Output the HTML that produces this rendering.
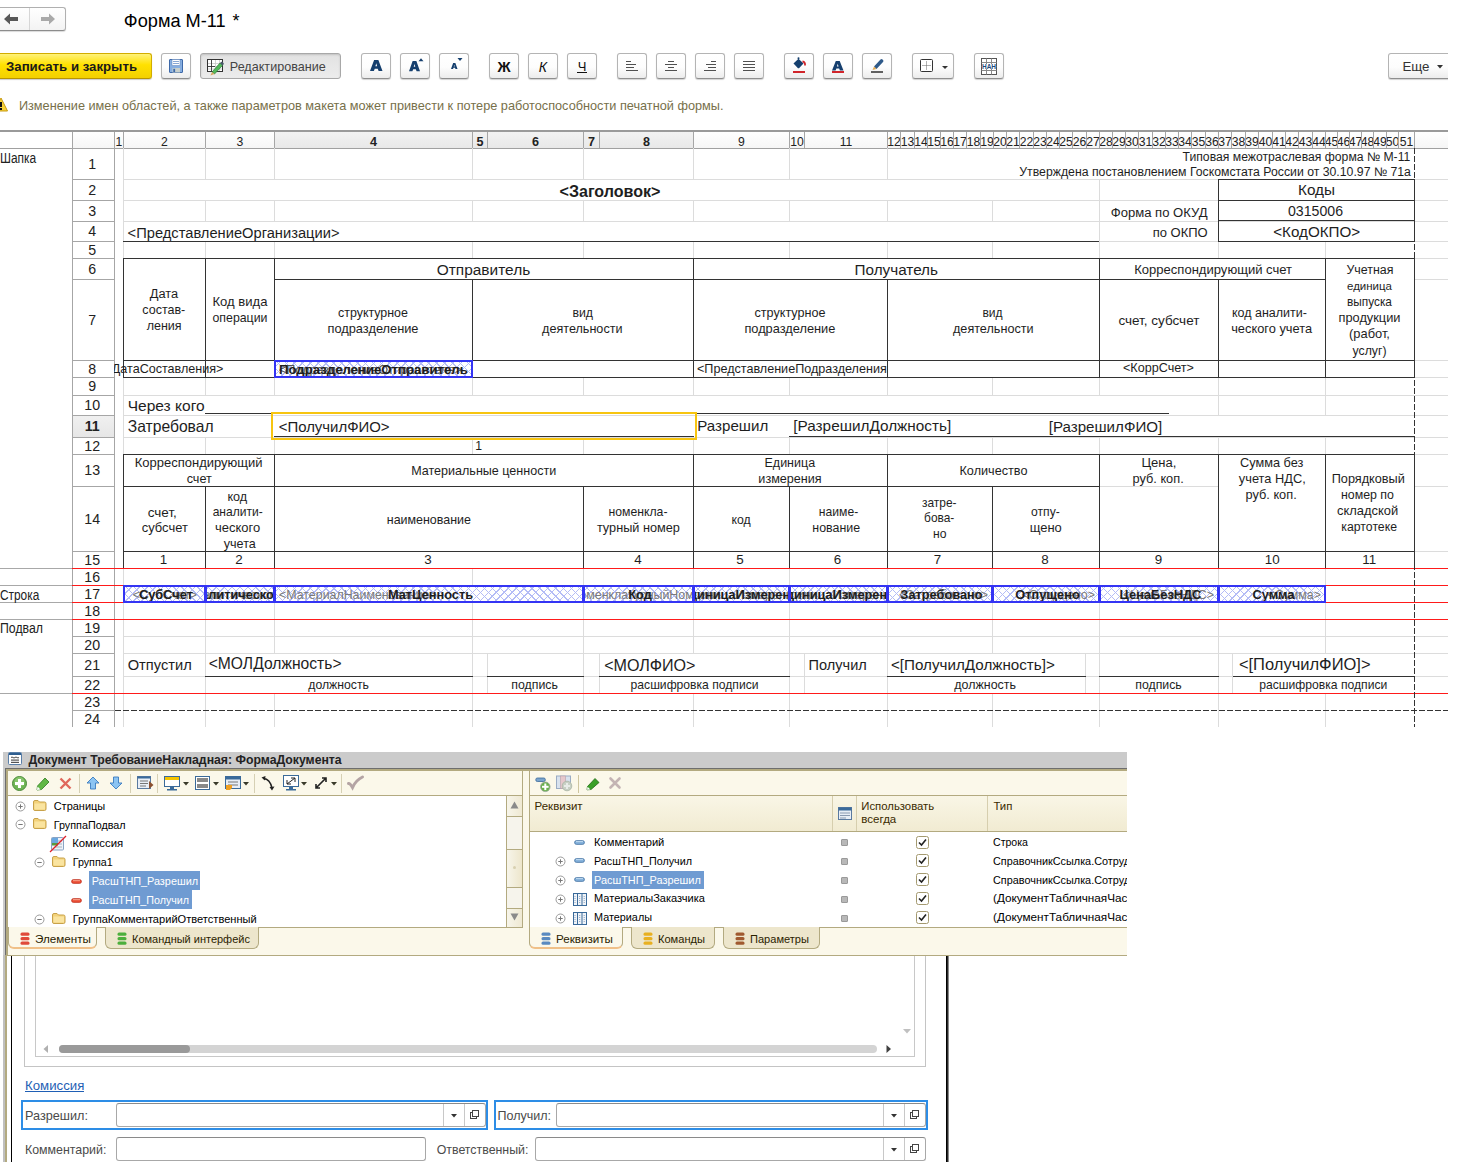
<!DOCTYPE html><html><head><meta charset="utf-8"><style>
html,body{margin:0;padding:0;background:#fff;width:1458px;height:1162px;overflow:hidden;position:relative;}
body{font-family:"Liberation Sans",sans-serif;}
.a{position:absolute;}
.t{position:absolute;white-space:nowrap;}
svg{position:absolute;overflow:visible;}
</style></head><body><div class="a" style="left:-4px;top:7px;width:70px;height:24px;background:linear-gradient(#ffffff,#f3f3f3);border:1px solid #b0b0b0;border-bottom-color:#8c8c8c;border-radius:3px;box-sizing:border-box;box-shadow:0 1px 1px rgba(0,0,0,0.15)"></div>
<div class="a" style="left:29px;top:8px;width:1px;height:22px;background:#d6d6d6;"></div>
<svg style="left:3px;top:13px" width="16" height="12" viewBox="0 0 16 12"><path d="M1 6 L7 0.5 L7 4 L15 4 L15 8 L7 8 L7 11.5 Z" fill="#585858"/></svg>
<svg style="left:40px;top:13px" width="16" height="12" viewBox="0 0 16 12"><path d="M15 6 L9 0.5 L9 4 L1 4 L1 8 L9 8 L9 11.5 Z" fill="#a9a9a9"/></svg>
<div class="t" style="left:123.80px;top:11.28px;font-size:18.22px;line-height:20px;color:#000;">Форма М-11</div>
<div class="t" style="left:232.50px;top:11.36px;font-size:18.00px;line-height:20px;color:#000;">*</div>
<div class="a" style="left:-3px;top:53px;width:155px;height:26px;background:linear-gradient(#fff27a 0%,#ffe100 45%,#f3d000 100%);border:1px solid #d2ad00;border-bottom-color:#b89400;border-radius:3px;box-sizing:border-box;box-shadow:0 1px 1px rgba(0,0,0,0.2)"></div>
<div class="t" style="left:6.00px;top:56.52px;font-size:13.22px;line-height:20px;color:#1a1a1a;font-weight:bold;">Записать и закрыть</div>
<div class="a" style="left:161px;top:53px;width:30px;height:26px;background:linear-gradient(#ffffff 0%,#fdfdfd 55%,#ececec 100%);border:1px solid #b4b4b4;border-bottom-color:#8e8e8e;border-radius:3px;box-sizing:border-box;box-shadow:0 1px 1px rgba(0,0,0,0.18)"></div>
<svg style="left:169px;top:59px" width="14" height="14" viewBox="0 0 14 14"><rect x="0.5" y="0.5" width="13" height="13" rx="0.5" fill="#86aee0" stroke="#3d68a8"/><rect x="3" y="0.5" width="8" height="6" fill="#fff" stroke="#5a80b8" stroke-width="0.5"/><path d="M4 2.5H10M4 4.5H10" stroke="#6a90c8" stroke-width="0.8"/><rect x="3.5" y="9" width="7.5" height="4.5" fill="#c8d0cc"/><rect x="4.3" y="9.8" width="1.8" height="3.2" fill="#3d68a8"/></svg>
<div class="a" style="left:200px;top:53px;width:141px;height:26px;background:linear-gradient(#e2e2e2,#ececec);border:1px solid #a8a8a8;border-radius:3px;box-sizing:border-box;box-shadow:inset 0 1px 2px rgba(0,0,0,0.15)"></div>
<svg style="left:206px;top:58px" width="19" height="17" viewBox="0 0 19 17"><rect x="1.5" y="1.5" width="15" height="12" fill="#fff" stroke="#333"/><path d="M2 5.5H16M2 8.5H16M2 11H16M9.5 2V13M13.5 2V13" stroke="#c8c8c8" stroke-width="0.8"/><path d="M5.5 2V13M2 8.5H9" stroke="#333" stroke-width="0.9"/><path d="M6 14 L14 5 L16.5 7.5 L8.5 16 Z" fill="#52b85a" stroke="#2f7a3a" stroke-width="0.7"/><path d="M14 5 L15 4 Q15.8 3.3 16.5 4 L17.5 5 Q18.2 5.7 17.5 6.5 L16.5 7.5Z" fill="#4a5a68"/><path d="M6 14 L8.5 16 L4.5 17.5Z" fill="#d8a860"/></svg>
<div class="t" style="left:229.80px;top:56.73px;font-size:12.60px;line-height:20px;color:#444;">Редактирование</div>
<div class="a" style="left:361px;top:53px;width:30px;height:26px;background:linear-gradient(#ffffff 0%,#fdfdfd 55%,#ececec 100%);border:1px solid #b4b4b4;border-bottom-color:#8e8e8e;border-radius:3px;box-sizing:border-box;box-shadow:0 1px 1px rgba(0,0,0,0.18)"></div>
<div class="a" style="left:400px;top:53px;width:30px;height:26px;background:linear-gradient(#ffffff 0%,#fdfdfd 55%,#ececec 100%);border:1px solid #b4b4b4;border-bottom-color:#8e8e8e;border-radius:3px;box-sizing:border-box;box-shadow:0 1px 1px rgba(0,0,0,0.18)"></div>
<div class="a" style="left:439px;top:53px;width:30px;height:26px;background:linear-gradient(#ffffff 0%,#fdfdfd 55%,#ececec 100%);border:1px solid #b4b4b4;border-bottom-color:#8e8e8e;border-radius:3px;box-sizing:border-box;box-shadow:0 1px 1px rgba(0,0,0,0.18)"></div>
<div class="a" style="left:489px;top:53px;width:30px;height:26px;background:linear-gradient(#ffffff 0%,#fdfdfd 55%,#ececec 100%);border:1px solid #b4b4b4;border-bottom-color:#8e8e8e;border-radius:3px;box-sizing:border-box;box-shadow:0 1px 1px rgba(0,0,0,0.18)"></div>
<div class="a" style="left:528px;top:53px;width:30px;height:26px;background:linear-gradient(#ffffff 0%,#fdfdfd 55%,#ececec 100%);border:1px solid #b4b4b4;border-bottom-color:#8e8e8e;border-radius:3px;box-sizing:border-box;box-shadow:0 1px 1px rgba(0,0,0,0.18)"></div>
<div class="a" style="left:567px;top:53px;width:30px;height:26px;background:linear-gradient(#ffffff 0%,#fdfdfd 55%,#ececec 100%);border:1px solid #b4b4b4;border-bottom-color:#8e8e8e;border-radius:3px;box-sizing:border-box;box-shadow:0 1px 1px rgba(0,0,0,0.18)"></div>
<div class="a" style="left:617px;top:53px;width:30px;height:26px;background:linear-gradient(#ffffff 0%,#fdfdfd 55%,#ececec 100%);border:1px solid #b4b4b4;border-bottom-color:#8e8e8e;border-radius:3px;box-sizing:border-box;box-shadow:0 1px 1px rgba(0,0,0,0.18)"></div>
<div class="a" style="left:656px;top:53px;width:30px;height:26px;background:linear-gradient(#ffffff 0%,#fdfdfd 55%,#ececec 100%);border:1px solid #b4b4b4;border-bottom-color:#8e8e8e;border-radius:3px;box-sizing:border-box;box-shadow:0 1px 1px rgba(0,0,0,0.18)"></div>
<div class="a" style="left:695px;top:53px;width:30px;height:26px;background:linear-gradient(#ffffff 0%,#fdfdfd 55%,#ececec 100%);border:1px solid #b4b4b4;border-bottom-color:#8e8e8e;border-radius:3px;box-sizing:border-box;box-shadow:0 1px 1px rgba(0,0,0,0.18)"></div>
<div class="a" style="left:734px;top:53px;width:30px;height:26px;background:linear-gradient(#ffffff 0%,#fdfdfd 55%,#ececec 100%);border:1px solid #b4b4b4;border-bottom-color:#8e8e8e;border-radius:3px;box-sizing:border-box;box-shadow:0 1px 1px rgba(0,0,0,0.18)"></div>
<div class="a" style="left:784px;top:53px;width:30px;height:26px;background:linear-gradient(#ffffff 0%,#fdfdfd 55%,#ececec 100%);border:1px solid #b4b4b4;border-bottom-color:#8e8e8e;border-radius:3px;box-sizing:border-box;box-shadow:0 1px 1px rgba(0,0,0,0.18)"></div>
<div class="a" style="left:823px;top:53px;width:30px;height:26px;background:linear-gradient(#ffffff 0%,#fdfdfd 55%,#ececec 100%);border:1px solid #b4b4b4;border-bottom-color:#8e8e8e;border-radius:3px;box-sizing:border-box;box-shadow:0 1px 1px rgba(0,0,0,0.18)"></div>
<div class="a" style="left:862px;top:53px;width:30px;height:26px;background:linear-gradient(#ffffff 0%,#fdfdfd 55%,#ececec 100%);border:1px solid #b4b4b4;border-bottom-color:#8e8e8e;border-radius:3px;box-sizing:border-box;box-shadow:0 1px 1px rgba(0,0,0,0.18)"></div>
<svg style="left:370px;top:60px" width="13.5" height="12" viewBox="0 0 13.5 12"><path d="M0 11 L4.12 0 L8.38 0 L12.5 11 L8.62 11 L7.75 8.80 L4.75 8.80 L3.88 11 Z M5.38 6.27 L6.25 3.30 L7.12 6.27 Z" fill="#153f6e" fill-rule="evenodd"/></svg>
<svg style="left:409.3px;top:60.7px" width="12" height="11.3" viewBox="0 0 12 11.3"><path d="M0 10.3 L3.63 0 L7.37 0 L11 10.3 L7.59 10.3 L6.82 8.24 L4.18 8.24 L3.41 10.3 Z M4.73 5.87 L5.50 3.09 L6.27 5.87 Z" fill="#153f6e" fill-rule="evenodd"/></svg>
<svg style="left:417.5px;top:57.5px" width="7" height="4" viewBox="0 0 7 4"><path d="M0.5 3.3 L3 0.3 L5.5 3.3Z" fill="#153f6e"/></svg>
<svg style="left:451px;top:63px" width="7.5" height="7" viewBox="0 0 7.5 7"><path d="M0 6 L2.15 0 L4.36 0 L6.5 6 L4.48 6 L4.03 4.80 L2.47 4.80 L2.02 6 Z M2.79 3.42 L3.25 1.80 L3.70 3.42 Z" fill="#153f6e" fill-rule="evenodd"/></svg>
<svg style="left:456.5px;top:58px" width="7" height="4" viewBox="0 0 7 4"><path d="M0.5 0 L5.5 0 L3 3Z" fill="#153f6e"/></svg>
<div class="t" style="left:497.45px;top:57.07px;font-size:14.50px;line-height:20px;color:#111;font-weight:bold;">Ж</div>
<div class="t" style="left:538.87px;top:56.55px;font-size:14.00px;line-height:20px;color:#111;font-style:italic;">К</div>
<div class="t" style="left:577.67px;top:56.69px;font-size:13.00px;line-height:20px;color:#111;">Ч</div>
<div class="a" style="left:577px;top:72px;width:10px;height:1px;background:#111;"></div>
<div class="a" style="left:626px;top:61px;width:5px;height:1px;background:#505050;"></div>
<div class="a" style="left:626px;top:64px;width:10px;height:1px;background:#505050;"></div>
<div class="a" style="left:626px;top:67px;width:8px;height:1px;background:#505050;"></div>
<div class="a" style="left:626px;top:70px;width:12px;height:1px;background:#505050;"></div>
<div class="a" style="left:668px;top:61px;width:6px;height:1px;background:#505050;"></div>
<div class="a" style="left:665px;top:64px;width:12px;height:1px;background:#505050;"></div>
<div class="a" style="left:668px;top:67px;width:6px;height:1px;background:#505050;"></div>
<div class="a" style="left:665px;top:70px;width:12px;height:1px;background:#505050;"></div>
<div class="a" style="left:711px;top:61px;width:5px;height:1px;background:#505050;"></div>
<div class="a" style="left:706px;top:64px;width:10px;height:1px;background:#505050;"></div>
<div class="a" style="left:708px;top:67px;width:8px;height:1px;background:#505050;"></div>
<div class="a" style="left:704px;top:70px;width:12px;height:1px;background:#505050;"></div>
<div class="a" style="left:743px;top:61px;width:12px;height:1px;background:#505050;"></div>
<div class="a" style="left:743px;top:64px;width:12px;height:1px;background:#505050;"></div>
<div class="a" style="left:743px;top:67px;width:12px;height:1px;background:#505050;"></div>
<div class="a" style="left:743px;top:70px;width:12px;height:1px;background:#505050;"></div>
<svg style="left:792px;top:57px" width="15" height="13" viewBox="0 0 15 13"><path d="M1.5 6.5 L6.5 1.8 L11.5 6.5 L7.5 10.8 Q6.5 11.8 5.5 10.8 Z" fill="#153f6e"/><circle cx="6.5" cy="1.3" r="1" fill="#153f6e"/><path d="M10.5 4.5 Q13.5 4.8 13 8.5" stroke="#d0242a" stroke-width="1.8" fill="none"/></svg>
<div class="a" style="left:793px;top:71px;width:12px;height:2px;background:#d0242a;"></div>
<svg style="left:832px;top:60.5px" width="12.5" height="10.5" viewBox="0 0 12.5 10.5"><path d="M0 9.5 L3.80 0 L7.71 0 L11.5 9.5 L7.93 9.5 L7.13 7.60 L4.37 7.60 L3.56 9.5 Z M4.95 5.41 L5.75 2.85 L6.55 5.41 Z" fill="#153f6e" fill-rule="evenodd"/></svg>
<div class="a" style="left:832px;top:71px;width:12px;height:2px;background:#d0242a;"></div>
<svg style="left:871px;top:57px" width="14" height="14" viewBox="0 0 14 14"><path d="M3 9.5 L9.5 2.5 Q10.5 1.5 11.5 2.5 L12 3 Q13 4 12 5 L5.5 12 Z" fill="#2f5a8a"/><path d="M3 9.5 L5.5 12 L1.5 13 Z" fill="#e0a850"/></svg>
<div class="a" style="left:871px;top:71px;width:12px;height:2px;background:#606060;"></div>
<div class="a" style="left:912px;top:53px;width:42px;height:26px;background:linear-gradient(#ffffff 0%,#fdfdfd 55%,#ececec 100%);border:1px solid #b4b4b4;border-bottom-color:#8e8e8e;border-radius:3px;box-sizing:border-box;box-shadow:0 1px 1px rgba(0,0,0,0.18)"></div>
<svg style="left:920px;top:59px" width="14" height="14" viewBox="0 0 14 14"><rect x="0.5" y="0.5" width="12" height="12" rx="1" fill="#fff" stroke="#333"/><path d="M6.5 2.5V11M2.5 6.5H11" stroke="#666" stroke-dasharray="1 1"/></svg>
<svg style="left:941.5px;top:66px" width="6" height="4" viewBox="0 0 6 4"><path d="M0 0H6L3 3Z" fill="#333"/></svg>
<div class="a" style="left:974px;top:53px;width:30px;height:26px;background:linear-gradient(#ffffff 0%,#fdfdfd 55%,#ececec 100%);border:1px solid #b4b4b4;border-bottom-color:#8e8e8e;border-radius:3px;box-sizing:border-box;box-shadow:0 1px 1px rgba(0,0,0,0.18)"></div>
<svg style="left:981px;top:58px" width="16" height="17" viewBox="0 0 16 17"><rect x="0.5" y="0.5" width="15" height="16" fill="#fff" stroke="#555"/><path d="M0.5 4.5H15.5M0.5 8.5H15.5M0.5 12.5H15.5M5.5 0.5V16.5M10.5 0.5V16.5" stroke="#888"/><rect x="1" y="6" width="14" height="5" fill="#fff"/><text x="8" y="10.6" font-size="6.5" font-weight="bold" text-anchor="middle" fill="#1d4a7c" font-family="Liberation Sans">HAH</text></svg>
<div class="a" style="left:1388px;top:50px;width:60px;height:32px;overflow:hidden">
<div class="a" style="left:0px;top:3px;width:66px;height:26px;background:linear-gradient(#ffffff 0%,#fdfdfd 55%,#ececec 100%);border:1px solid #b4b4b4;border-bottom-color:#8e8e8e;border-radius:3px;box-sizing:border-box;box-shadow:0 1px 1px rgba(0,0,0,0.18)"></div>
</div>
<div class="t" style="left:1402.40px;top:56.98px;font-size:13.32px;line-height:20px;color:#333;">Еще</div>
<svg style="left:1437px;top:65px" width="6" height="4" viewBox="0 0 6 4"><path d="M0 0H6L3 3.5Z" fill="#333"/></svg>
<svg style="left:-5px;top:97px" width="13" height="15" viewBox="0 0 13 15"><path d="M6 1 L12.5 14 L-0.5 14 Z" fill="#f7d23a" stroke="#c79a10"/><rect x="5" y="5" width="2" height="5" fill="#111"/><rect x="5" y="11" width="2" height="2" fill="#111"/></svg>
<div class="t" style="left:18.90px;top:95.94px;font-size:12.73px;line-height:20px;color:#77704a;">Изменение имен областей, а также параметров макета может привести к потере работоспособности печатной формы.</div>
<div class="a" style="left:72px;top:131px;width:1376px;height:17px;background:linear-gradient(#ffffff,#f6f6f6);"></div>
<div class="a" style="left:274px;top:132px;width:419px;height:16px;background:linear-gradient(#f2f2f2,#e8e8e8);"></div>
<div class="a" style="left:0px;top:130px;width:1448px;height:2px;background:#9a9a9a;"></div>
<div class="a" style="left:0px;top:148px;width:1448px;height:1px;background:#a0a0a0;"></div>
<div class="a" style="left:72px;top:132px;width:1px;height:595px;background:#a6a6a6;"></div>
<div class="a" style="left:114px;top:132px;width:1px;height:595px;background:#a6a6a6;"></div>
<div class="a" style="left:123px;top:132px;width:1px;height:16px;background:#a6a6a6;"></div>
<div class="a" style="left:115px;top:132px;width:8px;height:16px;overflow:hidden">
<div class="t" style="left:0.61px;top:0.37px;font-size:12.20px;line-height:20px;color:#222;">1</div>
</div>
<div class="a" style="left:205px;top:132px;width:1px;height:16px;background:#a6a6a6;"></div>
<div class="a" style="left:124px;top:132px;width:81px;height:16px;overflow:hidden">
<div class="t" style="left:37.11px;top:0.37px;font-size:12.20px;line-height:20px;color:#222;">2</div>
</div>
<div class="a" style="left:274px;top:132px;width:1px;height:16px;background:#a6a6a6;"></div>
<div class="a" style="left:206px;top:132px;width:68px;height:16px;overflow:hidden">
<div class="t" style="left:30.61px;top:0.37px;font-size:12.20px;line-height:20px;color:#222;">3</div>
</div>
<div class="a" style="left:472px;top:132px;width:1px;height:16px;background:#a6a6a6;"></div>
<div class="a" style="left:275px;top:132px;width:197px;height:16px;overflow:hidden">
<div class="t" style="left:95.00px;top:0.23px;font-size:12.60px;line-height:20px;color:#222;font-weight:bold;">4</div>
</div>
<div class="a" style="left:487px;top:132px;width:1px;height:16px;background:#a6a6a6;"></div>
<div class="a" style="left:473px;top:132px;width:14px;height:16px;overflow:hidden">
<div class="t" style="left:3.50px;top:0.23px;font-size:12.60px;line-height:20px;color:#222;font-weight:bold;">5</div>
</div>
<div class="a" style="left:583px;top:132px;width:1px;height:16px;background:#a6a6a6;"></div>
<div class="a" style="left:488px;top:132px;width:95px;height:16px;overflow:hidden">
<div class="t" style="left:44.00px;top:0.23px;font-size:12.60px;line-height:20px;color:#222;font-weight:bold;">6</div>
</div>
<div class="a" style="left:599px;top:132px;width:1px;height:16px;background:#a6a6a6;"></div>
<div class="a" style="left:584px;top:132px;width:15px;height:16px;overflow:hidden">
<div class="t" style="left:4.00px;top:0.23px;font-size:12.60px;line-height:20px;color:#222;font-weight:bold;">7</div>
</div>
<div class="a" style="left:693px;top:132px;width:1px;height:16px;background:#a6a6a6;"></div>
<div class="a" style="left:600px;top:132px;width:93px;height:16px;overflow:hidden">
<div class="t" style="left:43.00px;top:0.23px;font-size:12.60px;line-height:20px;color:#222;font-weight:bold;">8</div>
</div>
<div class="a" style="left:789px;top:132px;width:1px;height:16px;background:#a6a6a6;"></div>
<div class="a" style="left:694px;top:132px;width:95px;height:16px;overflow:hidden">
<div class="t" style="left:44.11px;top:0.37px;font-size:12.20px;line-height:20px;color:#222;">9</div>
</div>
<div class="a" style="left:804px;top:132px;width:1px;height:16px;background:#a6a6a6;"></div>
<div class="a" style="left:790px;top:132px;width:14px;height:16px;overflow:hidden">
<div class="t" style="left:0.22px;top:0.37px;font-size:12.20px;line-height:20px;color:#222;">10</div>
</div>
<div class="a" style="left:887px;top:132px;width:1px;height:16px;background:#a6a6a6;"></div>
<div class="a" style="left:805px;top:132px;width:82px;height:16px;overflow:hidden">
<div class="t" style="left:34.67px;top:0.37px;font-size:12.20px;line-height:20px;color:#222;">11</div>
</div>
<div class="a" style="left:900px;top:132px;width:1px;height:16px;background:#a6a6a6;"></div>
<div class="a" style="left:888px;top:132px;width:12px;height:16px;overflow:hidden">
<div class="t" style="left:-0.78px;top:0.37px;font-size:12.20px;line-height:20px;color:#222;">12</div>
</div>
<div class="a" style="left:914px;top:132px;width:1px;height:16px;background:#a6a6a6;"></div>
<div class="a" style="left:901px;top:132px;width:13px;height:16px;overflow:hidden">
<div class="t" style="left:-0.28px;top:0.37px;font-size:12.20px;line-height:20px;color:#222;">13</div>
</div>
<div class="a" style="left:927px;top:132px;width:1px;height:16px;background:#a6a6a6;"></div>
<div class="a" style="left:915px;top:132px;width:12px;height:16px;overflow:hidden">
<div class="t" style="left:-0.78px;top:0.37px;font-size:12.20px;line-height:20px;color:#222;">14</div>
</div>
<div class="a" style="left:940px;top:132px;width:1px;height:16px;background:#a6a6a6;"></div>
<div class="a" style="left:928px;top:132px;width:12px;height:16px;overflow:hidden">
<div class="t" style="left:-0.78px;top:0.37px;font-size:12.20px;line-height:20px;color:#222;">15</div>
</div>
<div class="a" style="left:953px;top:132px;width:1px;height:16px;background:#a6a6a6;"></div>
<div class="a" style="left:941px;top:132px;width:12px;height:16px;overflow:hidden">
<div class="t" style="left:-0.78px;top:0.37px;font-size:12.20px;line-height:20px;color:#222;">16</div>
</div>
<div class="a" style="left:966px;top:132px;width:1px;height:16px;background:#a6a6a6;"></div>
<div class="a" style="left:954px;top:132px;width:12px;height:16px;overflow:hidden">
<div class="t" style="left:-0.78px;top:0.37px;font-size:12.20px;line-height:20px;color:#222;">17</div>
</div>
<div class="a" style="left:980px;top:132px;width:1px;height:16px;background:#a6a6a6;"></div>
<div class="a" style="left:967px;top:132px;width:13px;height:16px;overflow:hidden">
<div class="t" style="left:-0.28px;top:0.37px;font-size:12.20px;line-height:20px;color:#222;">18</div>
</div>
<div class="a" style="left:993px;top:132px;width:1px;height:16px;background:#a6a6a6;"></div>
<div class="a" style="left:981px;top:132px;width:12px;height:16px;overflow:hidden">
<div class="t" style="left:-0.78px;top:0.37px;font-size:12.20px;line-height:20px;color:#222;">19</div>
</div>
<div class="a" style="left:1006px;top:132px;width:1px;height:16px;background:#a6a6a6;"></div>
<div class="a" style="left:994px;top:132px;width:12px;height:16px;overflow:hidden">
<div class="t" style="left:-0.78px;top:0.37px;font-size:12.20px;line-height:20px;color:#222;">20</div>
</div>
<div class="a" style="left:1019px;top:132px;width:1px;height:16px;background:#a6a6a6;"></div>
<div class="a" style="left:1007px;top:132px;width:12px;height:16px;overflow:hidden">
<div class="t" style="left:-0.78px;top:0.37px;font-size:12.20px;line-height:20px;color:#222;">21</div>
</div>
<div class="a" style="left:1033px;top:132px;width:1px;height:16px;background:#a6a6a6;"></div>
<div class="a" style="left:1020px;top:132px;width:13px;height:16px;overflow:hidden">
<div class="t" style="left:-0.28px;top:0.37px;font-size:12.20px;line-height:20px;color:#222;">22</div>
</div>
<div class="a" style="left:1046px;top:132px;width:1px;height:16px;background:#a6a6a6;"></div>
<div class="a" style="left:1034px;top:132px;width:12px;height:16px;overflow:hidden">
<div class="t" style="left:-0.78px;top:0.37px;font-size:12.20px;line-height:20px;color:#222;">23</div>
</div>
<div class="a" style="left:1059px;top:132px;width:1px;height:16px;background:#a6a6a6;"></div>
<div class="a" style="left:1047px;top:132px;width:12px;height:16px;overflow:hidden">
<div class="t" style="left:-0.78px;top:0.37px;font-size:12.20px;line-height:20px;color:#222;">24</div>
</div>
<div class="a" style="left:1072px;top:132px;width:1px;height:16px;background:#a6a6a6;"></div>
<div class="a" style="left:1060px;top:132px;width:12px;height:16px;overflow:hidden">
<div class="t" style="left:-0.78px;top:0.37px;font-size:12.20px;line-height:20px;color:#222;">25</div>
</div>
<div class="a" style="left:1086px;top:132px;width:1px;height:16px;background:#a6a6a6;"></div>
<div class="a" style="left:1073px;top:132px;width:13px;height:16px;overflow:hidden">
<div class="t" style="left:-0.28px;top:0.37px;font-size:12.20px;line-height:20px;color:#222;">26</div>
</div>
<div class="a" style="left:1099px;top:132px;width:1px;height:16px;background:#a6a6a6;"></div>
<div class="a" style="left:1087px;top:132px;width:12px;height:16px;overflow:hidden">
<div class="t" style="left:-0.78px;top:0.37px;font-size:12.20px;line-height:20px;color:#222;">27</div>
</div>
<div class="a" style="left:1112px;top:132px;width:1px;height:16px;background:#a6a6a6;"></div>
<div class="a" style="left:1100px;top:132px;width:12px;height:16px;overflow:hidden">
<div class="t" style="left:-0.78px;top:0.37px;font-size:12.20px;line-height:20px;color:#222;">28</div>
</div>
<div class="a" style="left:1125px;top:132px;width:1px;height:16px;background:#a6a6a6;"></div>
<div class="a" style="left:1113px;top:132px;width:12px;height:16px;overflow:hidden">
<div class="t" style="left:-0.78px;top:0.37px;font-size:12.20px;line-height:20px;color:#222;">29</div>
</div>
<div class="a" style="left:1138px;top:132px;width:1px;height:16px;background:#a6a6a6;"></div>
<div class="a" style="left:1126px;top:132px;width:12px;height:16px;overflow:hidden">
<div class="t" style="left:-0.78px;top:0.37px;font-size:12.20px;line-height:20px;color:#222;">30</div>
</div>
<div class="a" style="left:1152px;top:132px;width:1px;height:16px;background:#a6a6a6;"></div>
<div class="a" style="left:1139px;top:132px;width:13px;height:16px;overflow:hidden">
<div class="t" style="left:-0.28px;top:0.37px;font-size:12.20px;line-height:20px;color:#222;">31</div>
</div>
<div class="a" style="left:1165px;top:132px;width:1px;height:16px;background:#a6a6a6;"></div>
<div class="a" style="left:1153px;top:132px;width:12px;height:16px;overflow:hidden">
<div class="t" style="left:-0.78px;top:0.37px;font-size:12.20px;line-height:20px;color:#222;">32</div>
</div>
<div class="a" style="left:1178px;top:132px;width:1px;height:16px;background:#a6a6a6;"></div>
<div class="a" style="left:1166px;top:132px;width:12px;height:16px;overflow:hidden">
<div class="t" style="left:-0.78px;top:0.37px;font-size:12.20px;line-height:20px;color:#222;">33</div>
</div>
<div class="a" style="left:1191px;top:132px;width:1px;height:16px;background:#a6a6a6;"></div>
<div class="a" style="left:1179px;top:132px;width:12px;height:16px;overflow:hidden">
<div class="t" style="left:-0.78px;top:0.37px;font-size:12.20px;line-height:20px;color:#222;">34</div>
</div>
<div class="a" style="left:1205px;top:132px;width:1px;height:16px;background:#a6a6a6;"></div>
<div class="a" style="left:1192px;top:132px;width:13px;height:16px;overflow:hidden">
<div class="t" style="left:-0.28px;top:0.37px;font-size:12.20px;line-height:20px;color:#222;">35</div>
</div>
<div class="a" style="left:1218px;top:132px;width:1px;height:16px;background:#a6a6a6;"></div>
<div class="a" style="left:1206px;top:132px;width:12px;height:16px;overflow:hidden">
<div class="t" style="left:-0.78px;top:0.37px;font-size:12.20px;line-height:20px;color:#222;">36</div>
</div>
<div class="a" style="left:1231px;top:132px;width:1px;height:16px;background:#a6a6a6;"></div>
<div class="a" style="left:1219px;top:132px;width:12px;height:16px;overflow:hidden">
<div class="t" style="left:-0.78px;top:0.37px;font-size:12.20px;line-height:20px;color:#222;">37</div>
</div>
<div class="a" style="left:1245px;top:132px;width:1px;height:16px;background:#a6a6a6;"></div>
<div class="a" style="left:1232px;top:132px;width:13px;height:16px;overflow:hidden">
<div class="t" style="left:-0.28px;top:0.37px;font-size:12.20px;line-height:20px;color:#222;">38</div>
</div>
<div class="a" style="left:1258px;top:132px;width:1px;height:16px;background:#a6a6a6;"></div>
<div class="a" style="left:1246px;top:132px;width:12px;height:16px;overflow:hidden">
<div class="t" style="left:-0.78px;top:0.37px;font-size:12.20px;line-height:20px;color:#222;">39</div>
</div>
<div class="a" style="left:1272px;top:132px;width:1px;height:16px;background:#a6a6a6;"></div>
<div class="a" style="left:1259px;top:132px;width:13px;height:16px;overflow:hidden">
<div class="t" style="left:-0.28px;top:0.37px;font-size:12.20px;line-height:20px;color:#222;">40</div>
</div>
<div class="a" style="left:1285px;top:132px;width:1px;height:16px;background:#a6a6a6;"></div>
<div class="a" style="left:1273px;top:132px;width:12px;height:16px;overflow:hidden">
<div class="t" style="left:-0.78px;top:0.37px;font-size:12.20px;line-height:20px;color:#222;">41</div>
</div>
<div class="a" style="left:1298px;top:132px;width:1px;height:16px;background:#a6a6a6;"></div>
<div class="a" style="left:1286px;top:132px;width:12px;height:16px;overflow:hidden">
<div class="t" style="left:-0.78px;top:0.37px;font-size:12.20px;line-height:20px;color:#222;">42</div>
</div>
<div class="a" style="left:1312px;top:132px;width:1px;height:16px;background:#a6a6a6;"></div>
<div class="a" style="left:1299px;top:132px;width:13px;height:16px;overflow:hidden">
<div class="t" style="left:-0.28px;top:0.37px;font-size:12.20px;line-height:20px;color:#222;">43</div>
</div>
<div class="a" style="left:1325px;top:132px;width:1px;height:16px;background:#a6a6a6;"></div>
<div class="a" style="left:1313px;top:132px;width:12px;height:16px;overflow:hidden">
<div class="t" style="left:-0.78px;top:0.37px;font-size:12.20px;line-height:20px;color:#222;">44</div>
</div>
<div class="a" style="left:1337px;top:132px;width:1px;height:16px;background:#a6a6a6;"></div>
<div class="a" style="left:1326px;top:132px;width:11px;height:16px;overflow:hidden">
<div class="t" style="left:-1.28px;top:0.37px;font-size:12.20px;line-height:20px;color:#222;">45</div>
</div>
<div class="a" style="left:1349px;top:132px;width:1px;height:16px;background:#a6a6a6;"></div>
<div class="a" style="left:1338px;top:132px;width:11px;height:16px;overflow:hidden">
<div class="t" style="left:-1.28px;top:0.37px;font-size:12.20px;line-height:20px;color:#222;">46</div>
</div>
<div class="a" style="left:1361px;top:132px;width:1px;height:16px;background:#a6a6a6;"></div>
<div class="a" style="left:1350px;top:132px;width:11px;height:16px;overflow:hidden">
<div class="t" style="left:-1.28px;top:0.37px;font-size:12.20px;line-height:20px;color:#222;">47</div>
</div>
<div class="a" style="left:1373px;top:132px;width:1px;height:16px;background:#a6a6a6;"></div>
<div class="a" style="left:1362px;top:132px;width:11px;height:16px;overflow:hidden">
<div class="t" style="left:-1.28px;top:0.37px;font-size:12.20px;line-height:20px;color:#222;">48</div>
</div>
<div class="a" style="left:1386px;top:132px;width:1px;height:16px;background:#a6a6a6;"></div>
<div class="a" style="left:1374px;top:132px;width:12px;height:16px;overflow:hidden">
<div class="t" style="left:-0.78px;top:0.37px;font-size:12.20px;line-height:20px;color:#222;">49</div>
</div>
<div class="a" style="left:1398px;top:132px;width:1px;height:16px;background:#a6a6a6;"></div>
<div class="a" style="left:1387px;top:132px;width:11px;height:16px;overflow:hidden">
<div class="t" style="left:-1.28px;top:0.37px;font-size:12.20px;line-height:20px;color:#222;">50</div>
</div>
<div class="a" style="left:1414px;top:132px;width:1px;height:16px;background:#a6a6a6;"></div>
<div class="a" style="left:1399px;top:132px;width:15px;height:16px;overflow:hidden">
<div class="t" style="left:0.72px;top:0.37px;font-size:12.20px;line-height:20px;color:#222;">51</div>
</div>
<div class="a" style="left:1415px;top:132px;width:33px;height:16px;overflow:hidden">
<div class="t" style="left:33.00px;top:0.37px;font-size:12.20px;line-height:20px;color:#222;">9</div>
</div>
<div class="a" style="left:72px;top:179px;width:42px;height:1px;background:#a6a6a6;"></div>
<div class="t" style="left:88.25px;top:153.78px;font-size:14.20px;line-height:20px;color:#222;">1</div>
<div class="a" style="left:72px;top:200px;width:42px;height:1px;background:#a6a6a6;"></div>
<div class="t" style="left:88.25px;top:179.78px;font-size:14.20px;line-height:20px;color:#222;">2</div>
<div class="a" style="left:72px;top:221px;width:42px;height:1px;background:#a6a6a6;"></div>
<div class="t" style="left:88.25px;top:200.78px;font-size:14.20px;line-height:20px;color:#222;">3</div>
<div class="a" style="left:72px;top:241px;width:42px;height:1px;background:#a6a6a6;"></div>
<div class="t" style="left:88.25px;top:221.28px;font-size:14.20px;line-height:20px;color:#222;">4</div>
<div class="a" style="left:72px;top:258px;width:42px;height:1px;background:#a6a6a6;"></div>
<div class="t" style="left:88.25px;top:239.78px;font-size:14.20px;line-height:20px;color:#222;">5</div>
<div class="a" style="left:72px;top:279px;width:42px;height:1px;background:#a6a6a6;"></div>
<div class="t" style="left:88.25px;top:258.78px;font-size:14.20px;line-height:20px;color:#222;">6</div>
<div class="a" style="left:72px;top:360px;width:42px;height:1px;background:#a6a6a6;"></div>
<div class="t" style="left:88.25px;top:309.78px;font-size:14.20px;line-height:20px;color:#222;">7</div>
<div class="a" style="left:72px;top:377px;width:42px;height:1px;background:#a6a6a6;"></div>
<div class="t" style="left:88.25px;top:358.78px;font-size:14.20px;line-height:20px;color:#222;">8</div>
<div class="a" style="left:72px;top:395px;width:42px;height:1px;background:#a6a6a6;"></div>
<div class="t" style="left:88.25px;top:376.28px;font-size:14.20px;line-height:20px;color:#222;">9</div>
<div class="a" style="left:72px;top:415px;width:42px;height:1px;background:#a6a6a6;"></div>
<div class="t" style="left:84.30px;top:395.28px;font-size:14.20px;line-height:20px;color:#222;">10</div>
<div class="a" style="left:73px;top:416px;width:41px;height:21px;background:linear-gradient(#f0f0f0,#e6e6e6);"></div>
<div class="a" style="left:72px;top:437px;width:42px;height:1px;background:#a6a6a6;"></div>
<div class="t" style="left:84.70px;top:416.28px;font-size:14.20px;line-height:20px;color:#222;font-weight:bold;">11</div>
<div class="a" style="left:72px;top:454px;width:42px;height:1px;background:#a6a6a6;"></div>
<div class="t" style="left:84.30px;top:435.78px;font-size:14.20px;line-height:20px;color:#222;">12</div>
<div class="a" style="left:72px;top:486px;width:42px;height:1px;background:#a6a6a6;"></div>
<div class="t" style="left:84.30px;top:460.28px;font-size:14.20px;line-height:20px;color:#222;">13</div>
<div class="a" style="left:72px;top:551px;width:42px;height:1px;background:#a6a6a6;"></div>
<div class="t" style="left:84.30px;top:508.78px;font-size:14.20px;line-height:20px;color:#222;">14</div>
<div class="a" style="left:72px;top:568px;width:42px;height:1px;background:#a6a6a6;"></div>
<div class="t" style="left:84.30px;top:549.78px;font-size:14.20px;line-height:20px;color:#222;">15</div>
<div class="a" style="left:72px;top:585px;width:42px;height:1px;background:#a6a6a6;"></div>
<div class="t" style="left:84.30px;top:566.78px;font-size:14.20px;line-height:20px;color:#222;">16</div>
<div class="a" style="left:72px;top:602px;width:42px;height:1px;background:#a6a6a6;"></div>
<div class="t" style="left:84.30px;top:583.78px;font-size:14.20px;line-height:20px;color:#222;">17</div>
<div class="a" style="left:72px;top:619px;width:42px;height:1px;background:#a6a6a6;"></div>
<div class="t" style="left:84.30px;top:600.78px;font-size:14.20px;line-height:20px;color:#222;">18</div>
<div class="a" style="left:72px;top:636px;width:42px;height:1px;background:#a6a6a6;"></div>
<div class="t" style="left:84.30px;top:617.78px;font-size:14.20px;line-height:20px;color:#222;">19</div>
<div class="a" style="left:72px;top:653px;width:42px;height:1px;background:#a6a6a6;"></div>
<div class="t" style="left:84.30px;top:634.78px;font-size:14.20px;line-height:20px;color:#222;">20</div>
<div class="a" style="left:72px;top:676px;width:42px;height:1px;background:#a6a6a6;"></div>
<div class="t" style="left:84.30px;top:654.78px;font-size:14.20px;line-height:20px;color:#222;">21</div>
<div class="a" style="left:72px;top:693px;width:42px;height:1px;background:#a6a6a6;"></div>
<div class="t" style="left:84.30px;top:674.78px;font-size:14.20px;line-height:20px;color:#222;">22</div>
<div class="a" style="left:72px;top:710px;width:42px;height:1px;background:#a6a6a6;"></div>
<div class="t" style="left:84.30px;top:691.78px;font-size:14.20px;line-height:20px;color:#222;">23</div>
<div class="t" style="left:84.30px;top:708.78px;font-size:14.20px;line-height:20px;color:#222;">24</div>
<div class="a" style="left:72px;top:148px;width:42px;height:1px;background:#a6a6a6;"></div>
<div class="a" style="left:0px;top:568px;width:72px;height:1px;background:#a8a8a8;"></div>
<div class="a" style="left:0px;top:585px;width:72px;height:1px;background:#a8a8a8;"></div>
<div class="a" style="left:0px;top:602px;width:72px;height:1px;background:#a8a8a8;"></div>
<div class="a" style="left:0px;top:619px;width:72px;height:1px;background:#a8a8a8;"></div>
<div class="a" style="left:0px;top:693px;width:72px;height:1px;background:#a8a8a8;"></div>
<div class="t" style="left:0.00px;top:147.56px;font-size:14.53px;line-height:20px;color:#222;transform:scaleX(0.8220);transform-origin:0 0;">Шапка</div>
<div class="t" style="left:0.00px;top:584.56px;font-size:14.53px;line-height:20px;color:#222;transform:scaleX(0.8174);transform-origin:0 0;">Строка</div>
<div class="t" style="left:0.00px;top:618.36px;font-size:14.53px;line-height:20px;color:#222;transform:scaleX(0.8463);transform-origin:0 0;">Подвал</div>
<div class="a" style="left:123px;top:148px;width:1px;height:579px;background:#dcdcdc;"></div>
<div class="a" style="left:205px;top:148px;width:1px;height:31px;background:#dcdcdc;"></div>
<div class="a" style="left:274px;top:148px;width:1px;height:31px;background:#dcdcdc;"></div>
<div class="a" style="left:472px;top:148px;width:1px;height:31px;background:#dcdcdc;"></div>
<div class="a" style="left:583px;top:148px;width:1px;height:31px;background:#dcdcdc;"></div>
<div class="a" style="left:693px;top:148px;width:1px;height:31px;background:#dcdcdc;"></div>
<div class="a" style="left:789px;top:148px;width:1px;height:31px;background:#dcdcdc;"></div>
<div class="a" style="left:887px;top:148px;width:1px;height:31px;background:#dcdcdc;"></div>
<div class="a" style="left:1099px;top:179px;width:1px;height:21px;background:#dcdcdc;"></div>
<div class="a" style="left:205px;top:200px;width:1px;height:21px;background:#dcdcdc;"></div>
<div class="a" style="left:274px;top:200px;width:1px;height:21px;background:#dcdcdc;"></div>
<div class="a" style="left:472px;top:200px;width:1px;height:21px;background:#dcdcdc;"></div>
<div class="a" style="left:583px;top:200px;width:1px;height:21px;background:#dcdcdc;"></div>
<div class="a" style="left:693px;top:200px;width:1px;height:21px;background:#dcdcdc;"></div>
<div class="a" style="left:789px;top:200px;width:1px;height:21px;background:#dcdcdc;"></div>
<div class="a" style="left:887px;top:200px;width:1px;height:21px;background:#dcdcdc;"></div>
<div class="a" style="left:992px;top:200px;width:1px;height:21px;background:#dcdcdc;"></div>
<div class="a" style="left:1099px;top:200px;width:1px;height:21px;background:#dcdcdc;"></div>
<div class="a" style="left:1099px;top:221px;width:1px;height:20px;background:#dcdcdc;"></div>
<div class="a" style="left:205px;top:241px;width:1px;height:17px;background:#dcdcdc;"></div>
<div class="a" style="left:274px;top:241px;width:1px;height:17px;background:#dcdcdc;"></div>
<div class="a" style="left:472px;top:241px;width:1px;height:17px;background:#dcdcdc;"></div>
<div class="a" style="left:583px;top:241px;width:1px;height:17px;background:#dcdcdc;"></div>
<div class="a" style="left:693px;top:241px;width:1px;height:17px;background:#dcdcdc;"></div>
<div class="a" style="left:789px;top:241px;width:1px;height:17px;background:#dcdcdc;"></div>
<div class="a" style="left:887px;top:241px;width:1px;height:17px;background:#dcdcdc;"></div>
<div class="a" style="left:992px;top:241px;width:1px;height:17px;background:#dcdcdc;"></div>
<div class="a" style="left:1099px;top:241px;width:1px;height:17px;background:#dcdcdc;"></div>
<div class="a" style="left:1218px;top:241px;width:1px;height:17px;background:#dcdcdc;"></div>
<div class="a" style="left:1325px;top:241px;width:1px;height:17px;background:#dcdcdc;"></div>
<div class="a" style="left:205px;top:377px;width:1px;height:18px;background:#dcdcdc;"></div>
<div class="a" style="left:274px;top:377px;width:1px;height:18px;background:#dcdcdc;"></div>
<div class="a" style="left:472px;top:377px;width:1px;height:18px;background:#dcdcdc;"></div>
<div class="a" style="left:583px;top:377px;width:1px;height:18px;background:#dcdcdc;"></div>
<div class="a" style="left:693px;top:377px;width:1px;height:18px;background:#dcdcdc;"></div>
<div class="a" style="left:789px;top:377px;width:1px;height:18px;background:#dcdcdc;"></div>
<div class="a" style="left:887px;top:377px;width:1px;height:18px;background:#dcdcdc;"></div>
<div class="a" style="left:992px;top:377px;width:1px;height:18px;background:#dcdcdc;"></div>
<div class="a" style="left:1099px;top:377px;width:1px;height:18px;background:#dcdcdc;"></div>
<div class="a" style="left:1218px;top:377px;width:1px;height:18px;background:#dcdcdc;"></div>
<div class="a" style="left:1325px;top:377px;width:1px;height:18px;background:#dcdcdc;"></div>
<div class="a" style="left:1218px;top:395px;width:1px;height:20px;background:#dcdcdc;"></div>
<div class="a" style="left:1325px;top:395px;width:1px;height:20px;background:#dcdcdc;"></div>
<div class="a" style="left:205px;top:437px;width:1px;height:17px;background:#dcdcdc;"></div>
<div class="a" style="left:274px;top:437px;width:1px;height:17px;background:#dcdcdc;"></div>
<div class="a" style="left:472px;top:437px;width:1px;height:17px;background:#dcdcdc;"></div>
<div class="a" style="left:583px;top:437px;width:1px;height:17px;background:#dcdcdc;"></div>
<div class="a" style="left:693px;top:437px;width:1px;height:17px;background:#dcdcdc;"></div>
<div class="a" style="left:789px;top:437px;width:1px;height:17px;background:#dcdcdc;"></div>
<div class="a" style="left:887px;top:437px;width:1px;height:17px;background:#dcdcdc;"></div>
<div class="a" style="left:992px;top:437px;width:1px;height:17px;background:#dcdcdc;"></div>
<div class="a" style="left:1099px;top:437px;width:1px;height:17px;background:#dcdcdc;"></div>
<div class="a" style="left:1218px;top:437px;width:1px;height:17px;background:#dcdcdc;"></div>
<div class="a" style="left:1325px;top:437px;width:1px;height:17px;background:#dcdcdc;"></div>
<div class="a" style="left:205px;top:568px;width:1px;height:17px;background:#dcdcdc;"></div>
<div class="a" style="left:274px;top:568px;width:1px;height:17px;background:#dcdcdc;"></div>
<div class="a" style="left:472px;top:568px;width:1px;height:17px;background:#dcdcdc;"></div>
<div class="a" style="left:583px;top:568px;width:1px;height:17px;background:#dcdcdc;"></div>
<div class="a" style="left:693px;top:568px;width:1px;height:17px;background:#dcdcdc;"></div>
<div class="a" style="left:789px;top:568px;width:1px;height:17px;background:#dcdcdc;"></div>
<div class="a" style="left:887px;top:568px;width:1px;height:17px;background:#dcdcdc;"></div>
<div class="a" style="left:992px;top:568px;width:1px;height:17px;background:#dcdcdc;"></div>
<div class="a" style="left:1099px;top:568px;width:1px;height:17px;background:#dcdcdc;"></div>
<div class="a" style="left:1218px;top:568px;width:1px;height:17px;background:#dcdcdc;"></div>
<div class="a" style="left:1325px;top:568px;width:1px;height:17px;background:#dcdcdc;"></div>
<div class="a" style="left:205px;top:602px;width:1px;height:17px;background:#dcdcdc;"></div>
<div class="a" style="left:274px;top:602px;width:1px;height:17px;background:#dcdcdc;"></div>
<div class="a" style="left:472px;top:602px;width:1px;height:17px;background:#dcdcdc;"></div>
<div class="a" style="left:583px;top:602px;width:1px;height:17px;background:#dcdcdc;"></div>
<div class="a" style="left:693px;top:602px;width:1px;height:17px;background:#dcdcdc;"></div>
<div class="a" style="left:789px;top:602px;width:1px;height:17px;background:#dcdcdc;"></div>
<div class="a" style="left:887px;top:602px;width:1px;height:17px;background:#dcdcdc;"></div>
<div class="a" style="left:992px;top:602px;width:1px;height:17px;background:#dcdcdc;"></div>
<div class="a" style="left:1099px;top:602px;width:1px;height:17px;background:#dcdcdc;"></div>
<div class="a" style="left:1218px;top:602px;width:1px;height:17px;background:#dcdcdc;"></div>
<div class="a" style="left:1325px;top:602px;width:1px;height:17px;background:#dcdcdc;"></div>
<div class="a" style="left:205px;top:619px;width:1px;height:17px;background:#dcdcdc;"></div>
<div class="a" style="left:274px;top:619px;width:1px;height:17px;background:#dcdcdc;"></div>
<div class="a" style="left:472px;top:619px;width:1px;height:17px;background:#dcdcdc;"></div>
<div class="a" style="left:583px;top:619px;width:1px;height:17px;background:#dcdcdc;"></div>
<div class="a" style="left:693px;top:619px;width:1px;height:17px;background:#dcdcdc;"></div>
<div class="a" style="left:789px;top:619px;width:1px;height:17px;background:#dcdcdc;"></div>
<div class="a" style="left:887px;top:619px;width:1px;height:17px;background:#dcdcdc;"></div>
<div class="a" style="left:992px;top:619px;width:1px;height:17px;background:#dcdcdc;"></div>
<div class="a" style="left:1099px;top:619px;width:1px;height:17px;background:#dcdcdc;"></div>
<div class="a" style="left:1218px;top:619px;width:1px;height:17px;background:#dcdcdc;"></div>
<div class="a" style="left:1325px;top:619px;width:1px;height:17px;background:#dcdcdc;"></div>
<div class="a" style="left:205px;top:636px;width:1px;height:17px;background:#dcdcdc;"></div>
<div class="a" style="left:274px;top:636px;width:1px;height:17px;background:#dcdcdc;"></div>
<div class="a" style="left:472px;top:636px;width:1px;height:17px;background:#dcdcdc;"></div>
<div class="a" style="left:583px;top:636px;width:1px;height:17px;background:#dcdcdc;"></div>
<div class="a" style="left:693px;top:636px;width:1px;height:17px;background:#dcdcdc;"></div>
<div class="a" style="left:789px;top:636px;width:1px;height:17px;background:#dcdcdc;"></div>
<div class="a" style="left:887px;top:636px;width:1px;height:17px;background:#dcdcdc;"></div>
<div class="a" style="left:992px;top:636px;width:1px;height:17px;background:#dcdcdc;"></div>
<div class="a" style="left:1099px;top:636px;width:1px;height:17px;background:#dcdcdc;"></div>
<div class="a" style="left:1218px;top:636px;width:1px;height:17px;background:#dcdcdc;"></div>
<div class="a" style="left:1325px;top:636px;width:1px;height:17px;background:#dcdcdc;"></div>
<div class="a" style="left:205px;top:653px;width:1px;height:23px;background:#dcdcdc;"></div>
<div class="a" style="left:472px;top:653px;width:1px;height:23px;background:#dcdcdc;"></div>
<div class="a" style="left:487px;top:653px;width:1px;height:23px;background:#dcdcdc;"></div>
<div class="a" style="left:583px;top:653px;width:1px;height:23px;background:#dcdcdc;"></div>
<div class="a" style="left:599px;top:653px;width:1px;height:23px;background:#dcdcdc;"></div>
<div class="a" style="left:789px;top:653px;width:1px;height:23px;background:#dcdcdc;"></div>
<div class="a" style="left:804px;top:653px;width:1px;height:23px;background:#dcdcdc;"></div>
<div class="a" style="left:887px;top:653px;width:1px;height:23px;background:#dcdcdc;"></div>
<div class="a" style="left:1085px;top:653px;width:1px;height:23px;background:#dcdcdc;"></div>
<div class="a" style="left:1099px;top:653px;width:1px;height:23px;background:#dcdcdc;"></div>
<div class="a" style="left:1218px;top:653px;width:1px;height:23px;background:#dcdcdc;"></div>
<div class="a" style="left:1232px;top:653px;width:1px;height:23px;background:#dcdcdc;"></div>
<div class="a" style="left:205px;top:676px;width:1px;height:17px;background:#dcdcdc;"></div>
<div class="a" style="left:472px;top:676px;width:1px;height:17px;background:#dcdcdc;"></div>
<div class="a" style="left:487px;top:676px;width:1px;height:17px;background:#dcdcdc;"></div>
<div class="a" style="left:583px;top:676px;width:1px;height:17px;background:#dcdcdc;"></div>
<div class="a" style="left:599px;top:676px;width:1px;height:17px;background:#dcdcdc;"></div>
<div class="a" style="left:789px;top:676px;width:1px;height:17px;background:#dcdcdc;"></div>
<div class="a" style="left:804px;top:676px;width:1px;height:17px;background:#dcdcdc;"></div>
<div class="a" style="left:887px;top:676px;width:1px;height:17px;background:#dcdcdc;"></div>
<div class="a" style="left:1085px;top:676px;width:1px;height:17px;background:#dcdcdc;"></div>
<div class="a" style="left:1099px;top:676px;width:1px;height:17px;background:#dcdcdc;"></div>
<div class="a" style="left:1218px;top:676px;width:1px;height:17px;background:#dcdcdc;"></div>
<div class="a" style="left:1232px;top:676px;width:1px;height:17px;background:#dcdcdc;"></div>
<div class="a" style="left:205px;top:693px;width:1px;height:17px;background:#dcdcdc;"></div>
<div class="a" style="left:274px;top:693px;width:1px;height:17px;background:#dcdcdc;"></div>
<div class="a" style="left:472px;top:693px;width:1px;height:17px;background:#dcdcdc;"></div>
<div class="a" style="left:583px;top:693px;width:1px;height:17px;background:#dcdcdc;"></div>
<div class="a" style="left:693px;top:693px;width:1px;height:17px;background:#dcdcdc;"></div>
<div class="a" style="left:789px;top:693px;width:1px;height:17px;background:#dcdcdc;"></div>
<div class="a" style="left:887px;top:693px;width:1px;height:17px;background:#dcdcdc;"></div>
<div class="a" style="left:992px;top:693px;width:1px;height:17px;background:#dcdcdc;"></div>
<div class="a" style="left:1099px;top:693px;width:1px;height:17px;background:#dcdcdc;"></div>
<div class="a" style="left:1218px;top:693px;width:1px;height:17px;background:#dcdcdc;"></div>
<div class="a" style="left:1325px;top:693px;width:1px;height:17px;background:#dcdcdc;"></div>
<div class="a" style="left:205px;top:710px;width:1px;height:17px;background:#dcdcdc;"></div>
<div class="a" style="left:274px;top:710px;width:1px;height:17px;background:#dcdcdc;"></div>
<div class="a" style="left:472px;top:710px;width:1px;height:17px;background:#dcdcdc;"></div>
<div class="a" style="left:583px;top:710px;width:1px;height:17px;background:#dcdcdc;"></div>
<div class="a" style="left:693px;top:710px;width:1px;height:17px;background:#dcdcdc;"></div>
<div class="a" style="left:789px;top:710px;width:1px;height:17px;background:#dcdcdc;"></div>
<div class="a" style="left:887px;top:710px;width:1px;height:17px;background:#dcdcdc;"></div>
<div class="a" style="left:992px;top:710px;width:1px;height:17px;background:#dcdcdc;"></div>
<div class="a" style="left:1099px;top:710px;width:1px;height:17px;background:#dcdcdc;"></div>
<div class="a" style="left:1218px;top:710px;width:1px;height:17px;background:#dcdcdc;"></div>
<div class="a" style="left:1325px;top:710px;width:1px;height:17px;background:#dcdcdc;"></div>
<div class="a" style="left:123px;top:179px;width:1325px;height:1px;background:#dcdcdc;"></div>
<div class="a" style="left:123px;top:200px;width:1325px;height:1px;background:#dcdcdc;"></div>
<div class="a" style="left:123px;top:221px;width:1325px;height:1px;background:#dcdcdc;"></div>
<div class="a" style="left:123px;top:241px;width:1325px;height:1px;background:#dcdcdc;"></div>
<div class="a" style="left:123px;top:258px;width:1325px;height:1px;background:#dcdcdc;"></div>
<div class="a" style="left:1414px;top:279px;width:34px;height:1px;background:#dcdcdc;"></div>
<div class="a" style="left:123px;top:360px;width:1325px;height:1px;background:#dcdcdc;"></div>
<div class="a" style="left:123px;top:377px;width:1325px;height:1px;background:#dcdcdc;"></div>
<div class="a" style="left:123px;top:395px;width:1325px;height:1px;background:#dcdcdc;"></div>
<div class="a" style="left:123px;top:415px;width:1325px;height:1px;background:#dcdcdc;"></div>
<div class="a" style="left:123px;top:437px;width:1325px;height:1px;background:#dcdcdc;"></div>
<div class="a" style="left:123px;top:454px;width:1325px;height:1px;background:#dcdcdc;"></div>
<div class="a" style="left:1099px;top:486px;width:119px;height:1px;background:#dcdcdc;"></div>
<div class="a" style="left:1414px;top:486px;width:34px;height:1px;background:#dcdcdc;"></div>
<div class="a" style="left:123px;top:551px;width:1325px;height:1px;background:#dcdcdc;"></div>
<div class="a" style="left:123px;top:568px;width:1325px;height:1px;background:#dcdcdc;"></div>
<div class="a" style="left:123px;top:585px;width:1325px;height:1px;background:#dcdcdc;"></div>
<div class="a" style="left:123px;top:602px;width:1325px;height:1px;background:#dcdcdc;"></div>
<div class="a" style="left:123px;top:619px;width:1325px;height:1px;background:#dcdcdc;"></div>
<div class="a" style="left:123px;top:636px;width:1325px;height:1px;background:#dcdcdc;"></div>
<div class="a" style="left:123px;top:653px;width:1325px;height:1px;background:#dcdcdc;"></div>
<div class="a" style="left:123px;top:676px;width:1325px;height:1px;background:#dcdcdc;"></div>
<div class="a" style="left:123px;top:693px;width:1325px;height:1px;background:#dcdcdc;"></div>
<div class="t" style="left:1182.50px;top:147.07px;font-size:12.21px;line-height:20px;color:#1e1e1e;">Типовая межотраслевая форма № М-11</div>
<div class="t" style="left:1019.30px;top:161.84px;font-size:12.28px;line-height:20px;color:#1e1e1e;">Утверждена постановлением Госкомстата России от 30.10.97 № 71а</div>
<div class="t" style="left:559.50px;top:180.53px;font-size:16.07px;line-height:20px;color:#1e1e1e;font-weight:bold;">&lt;Заголовок&gt;</div>
<div class="a" style="left:1218px;top:179px;width:197px;height:1px;background:#333333;"></div>
<div class="a" style="left:1218px;top:179px;width:1px;height:63px;background:#333333;"></div>
<div class="a" style="left:1414px;top:179px;width:1px;height:63px;background:#333333;"></div>
<div class="a" style="left:1218px;top:200px;width:197px;height:1px;background:#333333;"></div>
<div class="a" style="left:1218px;top:220px;width:197px;height:1px;background:#333333;"></div>
<div class="a" style="left:1218px;top:241px;width:197px;height:1px;background:#333333;"></div>
<div class="t" style="left:1298.00px;top:179.80px;font-size:15.29px;line-height:20px;color:#1e1e1e;">Коды</div>
<div class="t" style="left:1288.00px;top:200.50px;font-size:14.13px;line-height:20px;color:#1e1e1e;">0315006</div>
<div class="t" style="left:1273.20px;top:221.73px;font-size:15.19px;line-height:20px;color:#1e1e1e;">&lt;КодОКПО&gt;</div>
<div class="t" style="left:1110.70px;top:202.66px;font-size:13.09px;line-height:20px;color:#1e1e1e;">Форма по ОКУД</div>
<div class="t" style="left:1152.70px;top:223.00px;font-size:12.99px;line-height:20px;color:#1e1e1e;">по ОКПО</div>
<div class="t" style="left:127.60px;top:222.51px;font-size:14.69px;line-height:20px;color:#1e1e1e;">&lt;ПредставлениеОрганизации&gt;</div>
<div class="a" style="left:123px;top:241px;width:976px;height:1px;background:#333333;"></div>
<div class="a" style="left:123px;top:258px;width:1292px;height:1px;background:#333333;"></div>
<div class="a" style="left:274px;top:279px;width:1051px;height:1px;background:#333333;"></div>
<div class="a" style="left:123px;top:360px;width:1292px;height:1px;background:#333333;"></div>
<div class="a" style="left:123px;top:377px;width:1292px;height:1px;background:#333333;"></div>
<div class="a" style="left:123px;top:258px;width:1px;height:120px;background:#333333;"></div>
<div class="a" style="left:205px;top:258px;width:1px;height:120px;background:#333333;"></div>
<div class="a" style="left:274px;top:258px;width:1px;height:120px;background:#333333;"></div>
<div class="a" style="left:693px;top:258px;width:1px;height:120px;background:#333333;"></div>
<div class="a" style="left:1099px;top:258px;width:1px;height:120px;background:#333333;"></div>
<div class="a" style="left:1325px;top:258px;width:1px;height:120px;background:#333333;"></div>
<div class="a" style="left:1414px;top:258px;width:1px;height:120px;background:#333333;"></div>
<div class="a" style="left:472px;top:279px;width:1px;height:99px;background:#333333;"></div>
<div class="a" style="left:887px;top:279px;width:1px;height:99px;background:#333333;"></div>
<div class="a" style="left:1218px;top:279px;width:1px;height:99px;background:#333333;"></div>
<div class="t" style="left:149.80px;top:284.35px;font-size:12.82px;line-height:20px;color:#1e1e1e;">Дата</div>
<div class="t" style="left:142.30px;top:300.26px;font-size:12.52px;line-height:20px;color:#1e1e1e;">состав-</div>
<div class="t" style="left:146.70px;top:316.25px;font-size:12.53px;line-height:20px;color:#1e1e1e;">ления</div>
<div class="t" style="left:212.50px;top:292.47px;font-size:13.07px;line-height:20px;color:#1e1e1e;">Код вида</div>
<div class="t" style="left:212.50px;top:308.32px;font-size:12.34px;line-height:20px;color:#1e1e1e;">операции</div>
<div class="t" style="left:436.75px;top:260.25px;font-size:15.44px;line-height:20px;color:#1e1e1e;">Отправитель</div>
<div class="t" style="left:338.00px;top:303.29px;font-size:12.43px;line-height:20px;color:#1e1e1e;">структурное</div>
<div class="t" style="left:327.50px;top:319.36px;font-size:12.80px;line-height:20px;color:#1e1e1e;">подразделение</div>
<div class="t" style="left:572.40px;top:303.33px;font-size:12.31px;line-height:20px;color:#1e1e1e;">вид</div>
<div class="t" style="left:542.05px;top:319.23px;font-size:12.62px;line-height:20px;color:#1e1e1e;">деятельности</div>
<div class="t" style="left:854.55px;top:260.00px;font-size:15.27px;line-height:20px;color:#1e1e1e;">Получатель</div>
<div class="t" style="left:754.50px;top:303.23px;font-size:12.61px;line-height:20px;color:#1e1e1e;">структурное</div>
<div class="t" style="left:744.40px;top:319.16px;font-size:12.80px;line-height:20px;color:#1e1e1e;">подразделение</div>
<div class="t" style="left:982.40px;top:303.41px;font-size:12.07px;line-height:20px;color:#1e1e1e;">вид</div>
<div class="t" style="left:953.00px;top:319.22px;font-size:12.63px;line-height:20px;color:#1e1e1e;">деятельности</div>
<div class="t" style="left:1134.20px;top:260.07px;font-size:13.05px;line-height:20px;color:#1e1e1e;">Корреспондирующий счет</div>
<div class="t" style="left:1118.40px;top:311.12px;font-size:13.50px;line-height:20px;color:#1e1e1e;">счет, субсчет</div>
<div class="t" style="left:1231.90px;top:303.27px;font-size:12.50px;line-height:20px;color:#1e1e1e;">код аналити-</div>
<div class="t" style="left:1231.20px;top:319.15px;font-size:12.84px;line-height:20px;color:#1e1e1e;">ческого учета</div>
<div class="t" style="left:1346.40px;top:260.30px;font-size:12.41px;line-height:20px;color:#1e1e1e;">Учетная</div>
<div class="t" style="left:1347.00px;top:276.22px;font-size:11.49px;line-height:20px;color:#1e1e1e;">единица</div>
<div class="t" style="left:1347.00px;top:292.24px;font-size:11.85px;line-height:20px;color:#1e1e1e;">выпуска</div>
<div class="t" style="left:1338.50px;top:308.06px;font-size:12.80px;line-height:20px;color:#1e1e1e;">продукции</div>
<div class="t" style="left:1349.00px;top:324.18px;font-size:12.90px;line-height:20px;color:#1e1e1e;">(работ,</div>
<div class="t" style="left:1352.50px;top:340.54px;font-size:12.27px;line-height:20px;color:#1e1e1e;">услуг)</div>
<div class="a" style="left:114px;top:361px;width:160px;height:16px;overflow:hidden">
<div class="t" style="left:-9.50px;top:-1.96px;font-size:12.57px;line-height:20px;color:#1e1e1e;">&lt;ДатаСоставления&gt;</div>
</div>
<div class="a" style="left:694px;top:361px;width:193px;height:16px;overflow:hidden">
<div class="t" style="left:3.00px;top:-2.27px;font-size:12.60px;line-height:20px;color:#1e1e1e;">&lt;ПредставлениеПодразделения&gt;</div>
</div>
<div class="t" style="left:1123.00px;top:358.23px;font-size:12.60px;line-height:20px;color:#1e1e1e;">&lt;КоррСчет&gt;</div>
<div class="a" style="left:274px;top:360px;width:199px;height:18px;background-color:#fff;background-image:repeating-linear-gradient(45deg,transparent 0 4.6px,#b4bcf6 4.6px 5.6px),repeating-linear-gradient(-45deg,transparent 0 4.6px,#b4bcf6 4.6px 5.6px);border:2px solid #3434f4;box-sizing:border-box"></div>
<div class="a" style="left:276px;top:362px;width:195px;height:14px;overflow:hidden">
<div class="t" style="left:3.00px;top:-1.97px;font-size:12.60px;line-height:20px;color:#555;">&lt;ПодразделениеОтправителя&gt;</div>
</div>
<div class="a" style="left:276px;top:362px;width:195px;height:14px;overflow:hidden">
<div class="t" style="left:3.00px;top:-2.17px;font-size:13.18px;line-height:20px;color:#1e1e1e;font-weight:bold;">ПодразделениеОтправитель</div>
</div>
<div class="t" style="left:127.70px;top:395.81px;font-size:15.54px;line-height:20px;color:#1e1e1e;">Через кого</div>
<div class="a" style="left:205px;top:413px;width:964px;height:1px;background:#333333;"></div>
<div class="t" style="left:127.70px;top:416.87px;font-size:15.67px;line-height:20px;color:#1e1e1e;">Затребовал</div>
<div class="t" style="left:278.70px;top:417.12px;font-size:14.95px;line-height:20px;color:#1e1e1e;">&lt;ПолучилФИО&gt;</div>
<div class="a" style="left:274px;top:436px;width:420px;height:1px;background:#333333;"></div>
<div class="a" style="left:271px;top:412px;width:426px;height:28px;border:2px solid #f7c510;box-sizing:border-box"></div>
<div class="t" style="left:697.30px;top:416.46px;font-size:15.12px;line-height:20px;color:#1e1e1e;">Разрешил</div>
<div class="t" style="left:793.30px;top:416.29px;font-size:15.32px;line-height:20px;color:#1e1e1e;">[РазрешилДолжность]</div>
<div class="t" style="left:1048.70px;top:417.15px;font-size:15.13px;line-height:20px;color:#1e1e1e;">[РазрешилФИО]</div>
<div class="a" style="left:789px;top:436px;width:626px;height:1px;background:#333333;"></div>
<div class="t" style="left:475.31px;top:435.77px;font-size:12.20px;line-height:20px;color:#1e1e1e;">1</div>
<div class="a" style="left:123px;top:454px;width:1292px;height:1px;background:#333333;"></div>
<div class="a" style="left:123px;top:486px;width:976px;height:1px;background:#333333;"></div>
<div class="a" style="left:123px;top:551px;width:1292px;height:1px;background:#333333;"></div>
<div class="a" style="left:123px;top:568px;width:1292px;height:1px;background:#333333;"></div>
<div class="a" style="left:123px;top:454px;width:1px;height:115px;background:#333333;"></div>
<div class="a" style="left:274px;top:454px;width:1px;height:115px;background:#333333;"></div>
<div class="a" style="left:693px;top:454px;width:1px;height:115px;background:#333333;"></div>
<div class="a" style="left:887px;top:454px;width:1px;height:115px;background:#333333;"></div>
<div class="a" style="left:1099px;top:454px;width:1px;height:115px;background:#333333;"></div>
<div class="a" style="left:1218px;top:454px;width:1px;height:115px;background:#333333;"></div>
<div class="a" style="left:1325px;top:454px;width:1px;height:115px;background:#333333;"></div>
<div class="a" style="left:1414px;top:454px;width:1px;height:115px;background:#333333;"></div>
<div class="a" style="left:205px;top:486px;width:1px;height:83px;background:#333333;"></div>
<div class="a" style="left:583px;top:486px;width:1px;height:83px;background:#333333;"></div>
<div class="a" style="left:789px;top:486px;width:1px;height:83px;background:#333333;"></div>
<div class="a" style="left:992px;top:486px;width:1px;height:83px;background:#333333;"></div>
<div class="t" style="left:134.70px;top:453.39px;font-size:13.01px;line-height:20px;color:#1e1e1e;">Корреспондирующий</div>
<div class="t" style="left:186.70px;top:469.01px;font-size:12.65px;line-height:20px;color:#1e1e1e;">счет</div>
<div class="t" style="left:147.75px;top:502.63px;font-size:13.48px;line-height:20px;color:#1e1e1e;">счет,</div>
<div class="t" style="left:141.70px;top:517.61px;font-size:12.96px;line-height:20px;color:#1e1e1e;">субсчет</div>
<div class="t" style="left:227.40px;top:486.82px;font-size:12.64px;line-height:20px;color:#1e1e1e;">код</div>
<div class="t" style="left:212.65px;top:502.42px;font-size:12.05px;line-height:20px;color:#1e1e1e;">аналити-</div>
<div class="t" style="left:215.00px;top:518.10px;font-size:12.98px;line-height:20px;color:#1e1e1e;">ческого</div>
<div class="t" style="left:223.75px;top:534.23px;font-size:12.60px;line-height:20px;color:#1e1e1e;">учета</div>
<div class="t" style="left:411.20px;top:460.95px;font-size:12.55px;line-height:20px;color:#1e1e1e;">Материальные ценности</div>
<div class="t" style="left:386.75px;top:509.88px;font-size:12.46px;line-height:20px;color:#1e1e1e;">наименование</div>
<div class="t" style="left:608.50px;top:502.16px;font-size:12.23px;line-height:20px;color:#1e1e1e;">номенкла-</div>
<div class="t" style="left:596.90px;top:517.69px;font-size:12.71px;line-height:20px;color:#1e1e1e;">турный номер</div>
<div class="t" style="left:731.40px;top:510.35px;font-size:12.26px;line-height:20px;color:#1e1e1e;">код</div>
<div class="t" style="left:764.50px;top:453.17px;font-size:12.50px;line-height:20px;color:#1e1e1e;">Единица</div>
<div class="t" style="left:758.35px;top:469.13px;font-size:12.60px;line-height:20px;color:#1e1e1e;">измерения</div>
<div class="t" style="left:959.50px;top:460.91px;font-size:12.66px;line-height:20px;color:#1e1e1e;">Количество</div>
<div class="t" style="left:818.80px;top:502.39px;font-size:12.15px;line-height:20px;color:#1e1e1e;">наиме-</div>
<div class="t" style="left:812.30px;top:518.30px;font-size:12.41px;line-height:20px;color:#1e1e1e;">нование</div>
<div class="t" style="left:922.00px;top:492.66px;font-size:11.95px;line-height:20px;color:#1e1e1e;">затре-</div>
<div class="t" style="left:924.05px;top:508.46px;font-size:11.94px;line-height:20px;color:#1e1e1e;">бова-</div>
<div class="t" style="left:933.05px;top:524.38px;font-size:12.18px;line-height:20px;color:#1e1e1e;">но</div>
<div class="t" style="left:1031.00px;top:502.38px;font-size:12.17px;line-height:20px;color:#1e1e1e;">отпу-</div>
<div class="t" style="left:1029.75px;top:518.11px;font-size:12.96px;line-height:20px;color:#1e1e1e;">щено</div>
<div class="t" style="left:1141.40px;top:452.78px;font-size:13.05px;line-height:20px;color:#1e1e1e;">Цена,</div>
<div class="t" style="left:1132.50px;top:469.17px;font-size:12.77px;line-height:20px;color:#1e1e1e;">руб. коп.</div>
<div class="t" style="left:1240.00px;top:452.88px;font-size:12.74px;line-height:20px;color:#1e1e1e;">Сумма без</div>
<div class="t" style="left:1238.85px;top:469.16px;font-size:12.80px;line-height:20px;color:#1e1e1e;">учета НДС,</div>
<div class="t" style="left:1245.50px;top:485.17px;font-size:12.77px;line-height:20px;color:#1e1e1e;">руб. коп.</div>
<div class="t" style="left:1331.70px;top:469.19px;font-size:12.71px;line-height:20px;color:#1e1e1e;">Порядковый</div>
<div class="t" style="left:1340.95px;top:485.30px;font-size:12.39px;line-height:20px;color:#1e1e1e;">номер по</div>
<div class="t" style="left:1336.95px;top:501.11px;font-size:12.95px;line-height:20px;color:#1e1e1e;">складской</div>
<div class="t" style="left:1341.35px;top:517.35px;font-size:12.27px;line-height:20px;color:#1e1e1e;">картотеке</div>
<div class="t" style="left:159.77px;top:549.75px;font-size:13.40px;line-height:20px;color:#1e1e1e;">1</div>
<div class="t" style="left:235.27px;top:549.75px;font-size:13.40px;line-height:20px;color:#1e1e1e;">2</div>
<div class="t" style="left:424.27px;top:549.75px;font-size:13.40px;line-height:20px;color:#1e1e1e;">3</div>
<div class="t" style="left:634.27px;top:549.75px;font-size:13.40px;line-height:20px;color:#1e1e1e;">4</div>
<div class="t" style="left:736.27px;top:549.75px;font-size:13.40px;line-height:20px;color:#1e1e1e;">5</div>
<div class="t" style="left:833.87px;top:549.75px;font-size:13.40px;line-height:20px;color:#1e1e1e;">6</div>
<div class="t" style="left:933.77px;top:549.75px;font-size:13.40px;line-height:20px;color:#1e1e1e;">7</div>
<div class="t" style="left:1041.27px;top:549.75px;font-size:13.40px;line-height:20px;color:#1e1e1e;">8</div>
<div class="t" style="left:1154.77px;top:549.75px;font-size:13.40px;line-height:20px;color:#1e1e1e;">9</div>
<div class="t" style="left:1264.75px;top:549.75px;font-size:13.40px;line-height:20px;color:#1e1e1e;">10</div>
<div class="t" style="left:1362.25px;top:549.75px;font-size:13.40px;line-height:20px;color:#1e1e1e;">11</div>
<div class="a" style="left:72px;top:568px;width:1376px;height:1px;background:#ff1a1a;"></div>
<div class="a" style="left:72px;top:585px;width:1376px;height:1px;background:#ff1a1a;"></div>
<div class="a" style="left:72px;top:602px;width:1376px;height:1px;background:#ff1a1a;"></div>
<div class="a" style="left:72px;top:619px;width:1376px;height:1px;background:#ff1a1a;"></div>
<div class="a" style="left:72px;top:693px;width:1376px;height:1px;background:#ff1a1a;"></div>
<div class="a" style="left:123px;top:585px;width:83px;height:18px;background-color:#fff;background-image:repeating-linear-gradient(45deg,transparent 0 4.6px,#b4bcf6 4.6px 5.6px),repeating-linear-gradient(-45deg,transparent 0 4.6px,#b4bcf6 4.6px 5.6px);border:2px solid #3434f4;box-sizing:border-box"></div>
<div class="a" style="left:125px;top:587px;width:79px;height:14px;overflow:hidden">
<div class="t" style="left:7.84px;top:-1.90px;font-size:12.40px;line-height:20px;color:#7a7a7a;">&lt;СубСчет&gt;</div>
</div>
<div class="a" style="left:125px;top:587px;width:79px;height:14px;overflow:hidden">
<div class="t" style="left:14.00px;top:-2.04px;font-size:12.80px;line-height:20px;color:#1e1e1e;font-weight:bold;">СубСчет</div>
</div>
<div class="a" style="left:205px;top:585px;width:70px;height:18px;background-color:#fff;background-image:repeating-linear-gradient(45deg,transparent 0 4.6px,#b4bcf6 4.6px 5.6px),repeating-linear-gradient(-45deg,transparent 0 4.6px,#b4bcf6 4.6px 5.6px);border:2px solid #3434f4;box-sizing:border-box"></div>
<div class="a" style="left:207px;top:587px;width:66px;height:14px;overflow:hidden">
<div class="t" style="left:-46.88px;top:-1.90px;font-size:12.40px;line-height:20px;color:#7a7a7a;">&lt;КодАналитическогоУчета&gt;</div>
</div>
<div class="a" style="left:207px;top:587px;width:66px;height:14px;overflow:hidden">
<div class="t" style="left:-46.54px;top:-2.04px;font-size:12.80px;line-height:20px;color:#1e1e1e;font-weight:bold;">КодАналитическогоУчета</div>
</div>
<div class="a" style="left:274px;top:585px;width:310px;height:18px;background-color:#fff;background-image:repeating-linear-gradient(45deg,transparent 0 4.6px,#b4bcf6 4.6px 5.6px),repeating-linear-gradient(-45deg,transparent 0 4.6px,#b4bcf6 4.6px 5.6px);border:2px solid #3434f4;box-sizing:border-box"></div>
<div class="a" style="left:276px;top:587px;width:306px;height:14px;overflow:hidden">
<div class="t" style="left:3.00px;top:-1.90px;font-size:12.40px;line-height:20px;color:#7a7a7a;">&lt;МатериалНаименование&gt;</div>
</div>
<div class="a" style="left:276px;top:587px;width:306px;height:14px;overflow:hidden">
<div class="t" style="left:111.90px;top:-2.04px;font-size:12.80px;line-height:20px;color:#1e1e1e;font-weight:bold;">МатЦенность</div>
</div>
<div class="a" style="left:583px;top:585px;width:111px;height:18px;background-color:#fff;background-image:repeating-linear-gradient(45deg,transparent 0 4.6px,#b4bcf6 4.6px 5.6px),repeating-linear-gradient(-45deg,transparent 0 4.6px,#b4bcf6 4.6px 5.6px);border:2px solid #3434f4;box-sizing:border-box"></div>
<div class="a" style="left:585px;top:587px;width:107px;height:14px;overflow:hidden">
<div class="t" style="left:-21.83px;top:-1.90px;font-size:12.40px;line-height:20px;color:#7a7a7a;">&lt;НоменклатурныйНомер&gt;</div>
</div>
<div class="a" style="left:585px;top:587px;width:107px;height:14px;overflow:hidden">
<div class="t" style="left:43.21px;top:-2.04px;font-size:12.80px;line-height:20px;color:#1e1e1e;font-weight:bold;">Код</div>
</div>
<div class="a" style="left:693px;top:585px;width:97px;height:18px;background-color:#fff;background-image:repeating-linear-gradient(45deg,transparent 0 4.6px,#b4bcf6 4.6px 5.6px),repeating-linear-gradient(-45deg,transparent 0 4.6px,#b4bcf6 4.6px 5.6px);border:2px solid #3434f4;box-sizing:border-box"></div>
<div class="a" style="left:695px;top:587px;width:93px;height:14px;overflow:hidden">
<div class="t" style="left:-17.49px;top:-1.90px;font-size:12.40px;line-height:20px;color:#7a7a7a;">&lt;ЕдиницаИзмерения&gt;</div>
</div>
<div class="a" style="left:695px;top:587px;width:93px;height:14px;overflow:hidden">
<div class="t" style="left:-14.55px;top:-2.04px;font-size:12.80px;line-height:20px;color:#1e1e1e;font-weight:bold;">ЕдиницаИзмерения</div>
</div>
<div class="a" style="left:789px;top:585px;width:99px;height:18px;background-color:#fff;background-image:repeating-linear-gradient(45deg,transparent 0 4.6px,#b4bcf6 4.6px 5.6px),repeating-linear-gradient(-45deg,transparent 0 4.6px,#b4bcf6 4.6px 5.6px);border:2px solid #3434f4;box-sizing:border-box"></div>
<div class="a" style="left:791px;top:587px;width:95px;height:14px;overflow:hidden">
<div class="t" style="left:-16.49px;top:-1.90px;font-size:12.40px;line-height:20px;color:#7a7a7a;">&lt;ЕдиницаИзмерения&gt;</div>
</div>
<div class="a" style="left:791px;top:587px;width:95px;height:14px;overflow:hidden">
<div class="t" style="left:-13.55px;top:-2.04px;font-size:12.80px;line-height:20px;color:#1e1e1e;font-weight:bold;">ЕдиницаИзмерения</div>
</div>
<div class="a" style="left:887px;top:585px;width:106px;height:18px;background-color:#fff;background-image:repeating-linear-gradient(45deg,transparent 0 4.6px,#b4bcf6 4.6px 5.6px),repeating-linear-gradient(-45deg,transparent 0 4.6px,#b4bcf6 4.6px 5.6px);border:2px solid #3434f4;box-sizing:border-box"></div>
<div class="a" style="left:889px;top:587px;width:102px;height:14px;overflow:hidden">
<div class="t" style="left:9.99px;top:-1.90px;font-size:12.40px;line-height:20px;color:#7a7a7a;">&lt;Затребовано&gt;</div>
</div>
<div class="a" style="left:889px;top:587px;width:102px;height:14px;overflow:hidden">
<div class="t" style="left:11.37px;top:-2.04px;font-size:12.80px;line-height:20px;color:#1e1e1e;font-weight:bold;">Затребовано</div>
</div>
<div class="a" style="left:992px;top:585px;width:108px;height:18px;background-color:#fff;background-image:repeating-linear-gradient(45deg,transparent 0 4.6px,#b4bcf6 4.6px 5.6px),repeating-linear-gradient(-45deg,transparent 0 4.6px,#b4bcf6 4.6px 5.6px);border:2px solid #3434f4;box-sizing:border-box"></div>
<div class="a" style="left:994px;top:587px;width:104px;height:14px;overflow:hidden">
<div class="t" style="left:27.57px;top:-1.90px;font-size:12.40px;line-height:20px;color:#7a7a7a;">&lt;Отпущено&gt;</div>
</div>
<div class="a" style="left:994px;top:587px;width:104px;height:14px;overflow:hidden">
<div class="t" style="left:21.23px;top:-2.04px;font-size:12.80px;line-height:20px;color:#1e1e1e;font-weight:bold;">Отпущено</div>
</div>
<div class="a" style="left:1099px;top:585px;width:120px;height:18px;background-color:#fff;background-image:repeating-linear-gradient(45deg,transparent 0 4.6px,#b4bcf6 4.6px 5.6px),repeating-linear-gradient(-45deg,transparent 0 4.6px,#b4bcf6 4.6px 5.6px);border:2px solid #3434f4;box-sizing:border-box"></div>
<div class="a" style="left:1101px;top:587px;width:116px;height:14px;overflow:hidden">
<div class="t" style="left:21.95px;top:-1.90px;font-size:12.40px;line-height:20px;color:#7a7a7a;">&lt;ЦенаБезНДС&gt;</div>
</div>
<div class="a" style="left:1101px;top:587px;width:116px;height:14px;overflow:hidden">
<div class="t" style="left:18.62px;top:-2.04px;font-size:12.80px;line-height:20px;color:#1e1e1e;font-weight:bold;">ЦенаБезНДС</div>
</div>
<div class="a" style="left:1218px;top:585px;width:108px;height:18px;background-color:#fff;background-image:repeating-linear-gradient(45deg,transparent 0 4.6px,#b4bcf6 4.6px 5.6px),repeating-linear-gradient(-45deg,transparent 0 4.6px,#b4bcf6 4.6px 5.6px);border:2px solid #3434f4;box-sizing:border-box"></div>
<div class="a" style="left:1220px;top:587px;width:104px;height:14px;overflow:hidden">
<div class="t" style="left:47.55px;top:-1.90px;font-size:12.40px;line-height:20px;color:#7a7a7a;">&lt;Сумма&gt;</div>
</div>
<div class="a" style="left:1220px;top:587px;width:104px;height:14px;overflow:hidden">
<div class="t" style="left:32.46px;top:-2.04px;font-size:12.80px;line-height:20px;color:#1e1e1e;font-weight:bold;">Сумма</div>
</div>
<div class="t" style="left:127.70px;top:654.52px;font-size:14.66px;line-height:20px;color:#1e1e1e;">Отпустил</div>
<div class="t" style="left:208.70px;top:654.17px;font-size:15.67px;line-height:20px;color:#1e1e1e;">&lt;МОЛДолжность&gt;</div>
<div class="a" style="left:205px;top:676px;width:268px;height:1px;background:#333333;"></div>
<div class="t" style="left:308.25px;top:675.26px;font-size:12.24px;line-height:20px;color:#1e1e1e;">должность</div>
<div class="a" style="left:487px;top:676px;width:97px;height:1px;background:#333333;"></div>
<div class="t" style="left:511.30px;top:675.03px;font-size:12.33px;line-height:20px;color:#1e1e1e;">подпись</div>
<div class="t" style="left:604.20px;top:654.51px;font-size:16.13px;line-height:20px;color:#1e1e1e;">&lt;МОЛФИО&gt;</div>
<div class="a" style="left:599px;top:676px;width:191px;height:1px;background:#333333;"></div>
<div class="t" style="left:630.60px;top:675.09px;font-size:12.13px;line-height:20px;color:#1e1e1e;">расшифровка подписи</div>
<div class="t" style="left:808.60px;top:655.06px;font-size:14.55px;line-height:20px;color:#1e1e1e;">Получил</div>
<div class="t" style="left:891.00px;top:654.63px;font-size:15.20px;line-height:20px;color:#1e1e1e;">&lt;[ПолучилДолжность]&gt;</div>
<div class="a" style="left:887px;top:676px;width:199px;height:1px;background:#333333;"></div>
<div class="t" style="left:954.35px;top:675.09px;font-size:12.45px;line-height:20px;color:#1e1e1e;">должность</div>
<div class="a" style="left:1099px;top:676px;width:120px;height:1px;background:#333333;"></div>
<div class="t" style="left:1135.25px;top:675.14px;font-size:12.30px;line-height:20px;color:#1e1e1e;">подпись</div>
<div class="t" style="left:1238.90px;top:654.18px;font-size:16.50px;line-height:20px;color:#1e1e1e;">&lt;[ПолучилФИО]&gt;</div>
<div class="a" style="left:1233px;top:676px;width:181px;height:1px;background:#333333;"></div>
<div class="t" style="left:1259.20px;top:675.19px;font-size:12.15px;line-height:20px;color:#1e1e1e;">расшифровка подписи</div>
<div class="a" style="left:115px;top:710px;width:1333px;height:1px;background:repeating-linear-gradient(90deg,#333 0 6px,transparent 6px 8px)"></div>
<div class="a" style="left:1414px;top:148px;width:1px;height:579px;background:repeating-linear-gradient(180deg,#333 0 6px,transparent 6px 8px)"></div>
<div class="a" style="left:3px;top:752px;width:1124px;height:16px;background:#cbcbcb;"></div>
<div class="a" style="left:3px;top:768px;width:1124px;height:187px;background:#cbcbcb;"></div>
<div class="a" style="left:5px;top:768px;width:1122px;height:1px;background:#6e6e6e;"></div>
<div class="a" style="left:5px;top:768px;width:1px;height:187px;background:#6e6e6e;"></div>
<div class="a" style="left:6px;top:769px;width:1121px;height:186px;background:#b3aa80;"></div>
<div class="a" style="left:8px;top:771px;width:1119px;height:184px;background:#fbf8ea;"></div>
<svg style="left:8px;top:752px" width="14" height="13" viewBox="0 0 14 13"><rect x="0.5" y="0.5" width="13" height="12" rx="1" fill="#fff" stroke="#5a7fa8"/><rect x="1" y="1" width="12" height="2" fill="#2f5f90"/><path d="M3 5.5 q1 -1 2 0 q1 1 2 0 q1 -1 2 0 q1 1 2 0" stroke="#333" fill="none" stroke-width="0.9"/><rect x="3" y="7.5" width="8" height="1.2" fill="#555"/><rect x="3" y="9.8" width="8" height="1.2" fill="#555"/></svg>
<div class="t" style="left:28.40px;top:749.85px;font-size:12.26px;line-height:20px;color:#222;font-weight:bold;">Документ ТребованиеНакладная: ФормаДокумента</div>
<div class="a" style="left:8px;top:771px;width:514px;height:24px;background:#fbf8ea;"></div>
<div class="a" style="left:8px;top:795px;width:514px;height:1px;background:#b3aa80;"></div>
<div class="a" style="left:522px;top:771px;width:1px;height:157px;background:#b3aa80;"></div>
<div class="a" style="left:529px;top:771px;width:1px;height:157px;background:#b3aa80;"></div>
<div class="a" style="left:8px;top:796px;width:498px;height:131px;background:#ffffff;"></div>
<div class="a" style="left:506px;top:796px;width:1px;height:131px;background:#b3aa80;"></div>
<div class="a" style="left:507px;top:796px;width:15px;height:131px;background:#f6f4ec;"></div>
<div class="a" style="left:507px;top:796px;width:15px;height:20px;background:linear-gradient(90deg,#f7f5ea,#efe9d3);"></div>
<div class="a" style="left:507px;top:816px;width:15px;height:1px;background:#b3aa80;"></div>
<svg style="left:510px;top:801px" width="9" height="8" viewBox="0 0 9 8"><path d="M4.5 0.5 L8.5 7.5 L0.5 7.5Z" fill="#8a8a8a"/></svg>
<div class="a" style="left:507px;top:849px;width:15px;height:38px;background:linear-gradient(90deg,#f7f5ea,#ede6cc);"></div>
<div class="a" style="left:507px;top:849px;width:15px;height:1px;background:#b3aa80;"></div>
<div class="a" style="left:507px;top:887px;width:15px;height:1px;background:#b3aa80;"></div>
<div class="a" style="left:513px;top:866px;width:3px;height:3px;background:#d8d0b0;border-radius:2px"></div>
<div class="a" style="left:507px;top:908px;width:15px;height:1px;background:#b3aa80;"></div>
<div class="a" style="left:507px;top:909px;width:15px;height:18px;background:linear-gradient(90deg,#f7f5ea,#efe9d3);"></div>
<svg style="left:510px;top:913px" width="9" height="8" viewBox="0 0 9 8"><path d="M0.5 0.5 L8.5 0.5 L4.5 7.5Z" fill="#8a8a8a"/></svg>
<div class="a" style="left:8px;top:927px;width:514px;height:1px;background:#b3aa80;"></div>
<svg style="left:12px;top:776px" width="15" height="15" viewBox="0 0 15 15"><circle cx="7.5" cy="7.5" r="7" fill="#6fb454" stroke="#4c8a3a"/><circle cx="7.5" cy="6" r="5" fill="#9ad07c" opacity="0.6"/><rect x="6" y="3" width="3" height="9" fill="#fff"/><rect x="3" y="6" width="9" height="3" fill="#fff"/></svg>
<svg style="left:36px;top:776px" width="14" height="14" viewBox="0 0 14 14"><path d="M1.5 10 L9 2 L13 6 L5.5 13.5 L1 14 Z" fill="#62b845" stroke="#2e7a22" stroke-width="0.8"/><path d="M1 14 L1.5 10.5 L4.5 13.5Z" fill="#fff"/></svg>
<svg style="left:59px;top:777px" width="13" height="13" viewBox="0 0 13 13"><path d="M1.5 1.5 L11.5 11.5 M11.5 1.5 L1.5 11.5" stroke="#e0685c" stroke-width="2.4"/></svg>
<div class="a" style="left:79px;top:774px;width:1px;height:19px;background:#d6d0b4;"></div>
<svg style="left:86px;top:776px" width="14" height="14" viewBox="0 0 14 14"><path d="M7 1 L13 7 L9.5 7 L9.5 13 L4.5 13 L4.5 7 L1 7Z" fill="#8cc4f2" stroke="#3a7cc0" stroke-width="0.9"/></svg>
<svg style="left:109px;top:776px" width="14" height="14" viewBox="0 0 14 14"><path d="M7 13 L13 7 L9.5 7 L9.5 1 L4.5 1 L4.5 7 L1 7Z" fill="#8cc4f2" stroke="#3a7cc0" stroke-width="0.9"/></svg>
<div class="a" style="left:130px;top:774px;width:1px;height:19px;background:#d6d0b4;"></div>
<svg style="left:137px;top:776px" width="17" height="15" viewBox="0 0 17 15"><rect x="0.5" y="0.5" width="13" height="12" fill="#e8eef6" stroke="#5a7aa0"/><rect x="0.5" y="0.5" width="13" height="2" fill="#3a6a9a"/><path d="M3 5H11M3 7.5H11M3 10H9" stroke="#777"/><path d="M12 5 L16.5 9 L12 13Z" fill="#8a5030"/></svg>
<div class="a" style="left:157px;top:774px;width:1px;height:19px;background:#d6d0b4;"></div>
<svg style="left:164px;top:776px" width="16" height="15" viewBox="0 0 16 15"><rect x="0.5" y="0.5" width="15" height="10" fill="#fff" stroke="#3a6a9a"/><rect x="1" y="1" width="14" height="3" fill="#f5c400"/><rect x="6" y="11" width="4" height="2" fill="#3a6a9a"/><rect x="3" y="13" width="10" height="1.5" fill="#3a6a9a"/></svg>
<svg style="left:183px;top:782px" width="6" height="4" viewBox="0 0 6 4"><path d="M0 0H6L3 3.5Z" fill="#3a3a2a"/></svg>
<svg style="left:195px;top:776px" width="15" height="15" viewBox="0 0 15 15"><rect x="0.5" y="0.5" width="14" height="13" fill="#fff" stroke="#3a6a9a"/><rect x="2" y="2" width="11" height="4" fill="#888"/><rect x="2" y="8" width="11" height="4" fill="#888"/></svg>
<svg style="left:213px;top:782px" width="6" height="4" viewBox="0 0 6 4"><path d="M0 0H6L3 3.5Z" fill="#3a3a2a"/></svg>
<svg style="left:225px;top:776px" width="17" height="15" viewBox="0 0 17 15"><rect x="0.5" y="0.5" width="15" height="12" fill="#e8eef6" stroke="#3a6a9a"/><rect x="0.5" y="0.5" width="15" height="3" fill="#3a6a9a"/><path d="M3 6H13M3 9H13" stroke="#777"/><path d="M1 9 L7 9 L7 12 L5 14 L1 14Z" fill="#f0a020"/></svg>
<svg style="left:243px;top:782px" width="6" height="4" viewBox="0 0 6 4"><path d="M0 0H6L3 3.5Z" fill="#3a3a2a"/></svg>
<div class="a" style="left:254px;top:774px;width:1px;height:19px;background:#d6d0b4;"></div>
<svg style="left:261px;top:776px" width="14" height="15" viewBox="0 0 14 15"><path d="M2.5 2.5 Q9 3 11 12" stroke="#222" stroke-width="1.4" fill="none"/><path d="M0.5 1.5 L4.5 0 L4 4.5Z" fill="#222"/><path d="M8.5 11 L13.5 10.5 L11 14.5Z" fill="#222"/></svg>
<svg style="left:283px;top:775px" width="17" height="16" viewBox="0 0 17 16"><rect x="0.5" y="0.5" width="15" height="11" fill="#fff" stroke="#3a6a9a"/><path d="M4 9 L12 3 M8 3H12V7 M4 5V9H8" stroke="#222" fill="none"/><rect x="6" y="12" width="4" height="2" fill="#3a6a9a"/><rect x="3" y="14" width="10" height="1.5" fill="#3a6a9a"/></svg>
<svg style="left:301px;top:782px" width="6" height="4" viewBox="0 0 6 4"><path d="M0 0H6L3 3.5Z" fill="#3a3a2a"/></svg>
<svg style="left:314px;top:776px" width="14" height="14" viewBox="0 0 14 14"><path d="M2 12 L12 2 M8 2H12V6 M2 8V12H6" stroke="#222" stroke-width="1.6" fill="none"/></svg>
<svg style="left:331px;top:782px" width="6" height="4" viewBox="0 0 6 4"><path d="M0 0H6L3 3.5Z" fill="#3a3a2a"/></svg>
<div class="a" style="left:341px;top:774px;width:1px;height:19px;background:#d6d0b4;"></div>
<svg style="left:347px;top:776px" width="17" height="15" viewBox="0 0 17 15"><path d="M1.5 7.5 Q3 7 5.5 11.5 Q9 4 15.5 1" stroke="#b4a4a4" stroke-width="3" fill="none" stroke-linecap="round"/></svg>
<svg style="left:14.5px;top:800.5px" width="11" height="11" viewBox="0 0 11 11"><circle cx="5.5" cy="5.5" r="4.5" fill="#fff" stroke="#9a9a9a"/><path d="M3.3 5.5H7.7" stroke="#777"/><path d="M5.5 3.3V7.7" stroke="#777"/></svg>
<svg style="left:32.5px;top:799.5px" width="14" height="11" viewBox="0 0 14 11"><path d="M0.5 2 Q0.5 0.5 2 0.5 L5 0.5 L6.5 2 L11.5 2 Q13 2 13 3.5 L13 9 Q13 10.5 11.5 10.5 L2 10.5 Q0.5 10.5 0.5 9Z" fill="#f3d27a" stroke="#c8a24a"/><rect x="1.5" y="3.5" width="10.5" height="6" fill="#fae4a0"/></svg>
<div class="t" style="left:53.70px;top:795.80px;font-size:10.97px;line-height:20px;color:#000;">Страницы</div>
<svg style="left:14.5px;top:819.35px" width="11" height="11" viewBox="0 0 11 11"><circle cx="5.5" cy="5.5" r="4.5" fill="#fff" stroke="#9a9a9a"/><path d="M3.3 5.5H7.7" stroke="#777"/></svg>
<svg style="left:32.5px;top:818.35px" width="14" height="11" viewBox="0 0 14 11"><path d="M0.5 2 Q0.5 0.5 2 0.5 L5 0.5 L6.5 2 L11.5 2 Q13 2 13 3.5 L13 9 Q13 10.5 11.5 10.5 L2 10.5 Q0.5 10.5 0.5 9Z" fill="#f3d27a" stroke="#c8a24a"/><rect x="1.5" y="3.5" width="10.5" height="6" fill="#fae4a0"/></svg>
<div class="t" style="left:53.70px;top:814.71px;font-size:10.80px;line-height:20px;color:#000;">ГруппаПодвал</div>
<svg style="left:48.5px;top:834.7px" width="18" height="18" viewBox="0 0 18 18"><rect x="2.5" y="2.5" width="12" height="12.5" rx="1" fill="#eef2f8" stroke="#8aa4c4"/><rect x="3" y="3" width="6" height="5" fill="#6aa8e0"/><rect x="3" y="8" width="6" height="2.5" fill="#5a9a40"/><path d="M9 6H13M9 9H13M6 12H13" stroke="#9aa8b8" stroke-width="0.9"/><path d="M1 17 L17 1" stroke="#e0202a" stroke-width="1.3"/></svg>
<div class="t" style="left:72.20px;top:833.36px;font-size:11.37px;line-height:20px;color:#000;">Комиссия</div>
<svg style="left:33.5px;top:857.05px" width="11" height="11" viewBox="0 0 11 11"><circle cx="5.5" cy="5.5" r="4.5" fill="#fff" stroke="#9a9a9a"/><path d="M3.3 5.5H7.7" stroke="#777"/></svg>
<svg style="left:51.5px;top:856.05px" width="14" height="11" viewBox="0 0 14 11"><path d="M0.5 2 Q0.5 0.5 2 0.5 L5 0.5 L6.5 2 L11.5 2 Q13 2 13 3.5 L13 9 Q13 10.5 11.5 10.5 L2 10.5 Q0.5 10.5 0.5 9Z" fill="#f3d27a" stroke="#c8a24a"/><rect x="1.5" y="3.5" width="10.5" height="6" fill="#fae4a0"/></svg>
<div class="t" style="left:72.70px;top:852.43px;font-size:10.74px;line-height:20px;color:#000;">Группа1</div>
<svg style="left:70.5px;top:878.9px" width="12" height="5" viewBox="0 0 12 5"><rect x="0.5" y="0.5" width="10" height="4" rx="2" fill="#e84a32" stroke="#b83020" stroke-width="0.6"/><rect x="2" y="1.2" width="7" height="1" fill="#f8a890"/></svg>
<div class="a" style="left:89.2px;top:871.4px;width:111.0px;height:19px;background:#6f9bd2;"></div>
<div class="t" style="left:91.70px;top:871.23px;font-size:10.87px;line-height:20px;color:#fff;">РасшТНП_Разрешил</div>
<svg style="left:70.5px;top:897.75px" width="12" height="5" viewBox="0 0 12 5"><rect x="0.5" y="0.5" width="10" height="4" rx="2" fill="#e84a32" stroke="#b83020" stroke-width="0.6"/><rect x="2" y="1.2" width="7" height="1" fill="#f8a890"/></svg>
<div class="a" style="left:89.2px;top:890.25px;width:102.5px;height:19px;background:#6f9bd2;"></div>
<div class="t" style="left:91.70px;top:890.14px;font-size:10.71px;line-height:20px;color:#fff;">РасшТНП_Получил</div>
<svg style="left:33.5px;top:913.6px" width="11" height="11" viewBox="0 0 11 11"><circle cx="5.5" cy="5.5" r="4.5" fill="#fff" stroke="#9a9a9a"/><path d="M3.3 5.5H7.7" stroke="#777"/></svg>
<svg style="left:51.5px;top:912.6px" width="14" height="11" viewBox="0 0 14 11"><path d="M0.5 2 Q0.5 0.5 2 0.5 L5 0.5 L6.5 2 L11.5 2 Q13 2 13 3.5 L13 9 Q13 10.5 11.5 10.5 L2 10.5 Q0.5 10.5 0.5 9Z" fill="#f3d27a" stroke="#c8a24a"/><rect x="1.5" y="3.5" width="10.5" height="6" fill="#fae4a0"/></svg>
<div class="t" style="left:72.70px;top:908.86px;font-size:11.08px;line-height:20px;color:#000;">ГруппаКомментарийОтветственный</div>
<div class="a" style="left:8px;top:927px;width:89px;height:22px;background:#fbf8ea;border:1px solid #b3aa80;border-top:none;border-radius:0 0 6px 6px;box-sizing:border-box;border-bottom:2px solid #f0c088;"></div>
<svg style="left:20px;top:932px" width="10" height="14" viewBox="0 0 10 14"><rect x="0.5" y="0.5" width="9" height="3.3" rx="1.5" fill="#e04a3a"/><rect x="0.5" y="5" width="9" height="3.3" rx="1.5" fill="#e04a3a"/><rect x="0.5" y="9.5" width="9" height="3.3" rx="1.5" fill="#e04a3a"/></svg>
<div class="t" style="left:35.00px;top:928.55px;font-size:11.67px;line-height:20px;color:#2a2200;">Элементы</div>
<div class="a" style="left:105px;top:927px;width:154px;height:22px;background:#ede6cc;border:1px solid #b3aa80;border-top:none;border-radius:0 0 6px 6px;box-sizing:border-box;"></div>
<svg style="left:117px;top:932px" width="10" height="14" viewBox="0 0 10 14"><rect x="0.5" y="0.5" width="9" height="3.3" rx="1.5" fill="#4caf3c"/><rect x="0.5" y="5" width="9" height="3.3" rx="1.5" fill="#4caf3c"/><rect x="0.5" y="9.5" width="9" height="3.3" rx="1.5" fill="#4caf3c"/></svg>
<div class="t" style="left:132.00px;top:928.79px;font-size:10.99px;line-height:20px;color:#2a2200;">Командный интерфейс</div>
<div class="a" style="left:530px;top:771px;width:597px;height:24px;background:#fbf8ea;"></div>
<div class="a" style="left:530px;top:795px;width:597px;height:1px;background:#b3aa80;"></div>
<svg style="left:535px;top:776px" width="16" height="16" viewBox="0 0 16 16"><rect x="0.8" y="2" width="9.5" height="3.5" rx="1.5" fill="#7aa4cc" stroke="#3a6a9a" stroke-width="0.8"/><circle cx="10.3" cy="10.8" r="4.8" fill="#6ab04c" stroke="#9aa89a" stroke-width="0.8"/><rect x="9.3" y="7.5" width="2" height="6.6" fill="#fff"/><rect x="7" y="9.8" width="6.6" height="2" fill="#fff"/></svg>
<svg style="left:556px;top:775px" width="17" height="17" viewBox="0 0 17 17"><rect x="0.5" y="1" width="14" height="12.5" fill="#d8e2ee" stroke="#9aacc4"/><rect x="4.5" y="1" width="5" height="12.5" fill="#e6c8cc" stroke="#b8a0a8" stroke-width="0.6"/><circle cx="11" cy="11" r="4.8" fill="#c8d0c4" stroke="#a8b4a4" stroke-width="0.8"/><rect x="10" y="8" width="2" height="6" fill="#e8ece8"/><rect x="8" y="10" width="6" height="2" fill="#e8ece8"/></svg>
<div class="a" style="left:578px;top:775px;width:1px;height:18px;background:#cfc6a0;"></div>
<svg style="left:586px;top:776px" width="14" height="14" viewBox="0 0 14 14"><path d="M1.5 10.5 L9 2.5 L13 6.5 L5 13.5 L1 13.8 Z" fill="#3aa028" stroke="#1e6a14" stroke-width="0.8"/><path d="M1 13.8 L1.5 10.8 L4.5 13.5Z" fill="#fff"/></svg>
<svg style="left:609px;top:777px" width="12" height="12" viewBox="0 0 12 12"><path d="M1.5 1.5 L10.5 10.5 M10.5 1.5 L1.5 10.5" stroke="#c4b4b4" stroke-width="2.6" stroke-linecap="round"/></svg>
<div class="a" style="left:530px;top:796px;width:597px;height:35px;background:linear-gradient(#f9f6e6,#f1ebd2);"></div>
<div class="a" style="left:530px;top:831px;width:597px;height:1px;background:#b3aa80;"></div>
<div class="a" style="left:832px;top:796px;width:1px;height:35px;background:#d6ceae;"></div>
<div class="a" style="left:856px;top:796px;width:1px;height:35px;background:#d6ceae;"></div>
<div class="a" style="left:987px;top:796px;width:1px;height:35px;background:#d6ceae;"></div>
<div class="t" style="left:534.60px;top:795.62px;font-size:11.48px;line-height:20px;color:#3a2a00;">Реквизит</div>
<svg style="left:838px;top:807px" width="14" height="13" viewBox="0 0 14 13"><rect x="0.5" y="0.5" width="13" height="12" fill="#e8eef6" stroke="#5a7aa0"/><rect x="0.5" y="0.5" width="13" height="3" fill="#3a6a9a"/><path d="M2 6H12M2 8.5H12M2 11H8" stroke="#8a9ab0"/></svg>
<div class="t" style="left:861.30px;top:795.67px;font-size:11.34px;line-height:20px;color:#3a2a00;">Использовать</div>
<div class="t" style="left:861.30px;top:808.60px;font-size:11.53px;line-height:20px;color:#3a2a00;">всегда</div>
<div class="t" style="left:993.40px;top:795.65px;font-size:11.40px;line-height:20px;color:#3a2a00;">Тип</div>
<div class="a" style="left:530px;top:832px;width:597px;height:96px;background:#ffffff;"></div>
<svg style="left:574px;top:839.5px" width="12" height="5" viewBox="0 0 12 5"><rect x="0.5" y="0.5" width="10" height="4" rx="2" fill="#7aa8d4" stroke="#3a6a9a" stroke-width="0.6"/><rect x="2" y="1.2" width="7" height="1" fill="#c8e0f4"/></svg>
<div class="t" style="left:594.00px;top:831.73px;font-size:11.18px;line-height:20px;color:#000;">Комментарий</div>
<div class="a" style="left:841px;top:839.0px;width:7px;height:7px;background:#b8b8b8;border:1px solid #9a9a9a;box-sizing:border-box;border-radius:1px"></div>
<svg style="left:916px;top:835.5px" width="14" height="14" viewBox="0 0 14 14"><rect x="0.5" y="0.5" width="12" height="12" rx="2" fill="#fff" stroke="#a49a70"/><path d="M3 6.5 L5.5 9 L10 3.5" stroke="#222" stroke-width="1.6" fill="none"/></svg>
<div class="a" style="left:988px;top:833.0px;width:139px;height:18.0px;overflow:hidden">
<div class="t" style="left:5.00px;top:-1.07px;font-size:10.58px;line-height:20px;color:#000;">Строка</div>
</div>
<svg style="left:555px;top:856.4px" width="11" height="11" viewBox="0 0 11 11"><circle cx="5.5" cy="5.5" r="4.5" fill="#fff" stroke="#9a9a9a"/><path d="M3.3 5.5H7.7M5.5 3.3V7.7" stroke="#777"/></svg>
<svg style="left:574px;top:858.4px" width="12" height="5" viewBox="0 0 12 5"><rect x="0.5" y="0.5" width="10" height="4" rx="2" fill="#7aa8d4" stroke="#3a6a9a" stroke-width="0.6"/><rect x="2" y="1.2" width="7" height="1" fill="#c8e0f4"/></svg>
<div class="t" style="left:594.00px;top:850.77px;font-size:10.77px;line-height:20px;color:#000;">РасшТНП_Получил</div>
<div class="a" style="left:841px;top:857.9px;width:7px;height:7px;background:#b8b8b8;border:1px solid #9a9a9a;box-sizing:border-box;border-radius:1px"></div>
<svg style="left:916px;top:854.4px" width="14" height="14" viewBox="0 0 14 14"><rect x="0.5" y="0.5" width="12" height="12" rx="2" fill="#fff" stroke="#a49a70"/><path d="M3 6.5 L5.5 9 L10 3.5" stroke="#222" stroke-width="1.6" fill="none"/></svg>
<div class="a" style="left:988px;top:851.9px;width:139px;height:18.0px;overflow:hidden">
<div class="t" style="left:5.00px;top:-1.16px;font-size:10.86px;line-height:20px;color:#000;">СправочникСсылка.Сотрудники</div>
</div>
<svg style="left:555px;top:875.3px" width="11" height="11" viewBox="0 0 11 11"><circle cx="5.5" cy="5.5" r="4.5" fill="#fff" stroke="#9a9a9a"/><path d="M3.3 5.5H7.7M5.5 3.3V7.7" stroke="#777"/></svg>
<svg style="left:574px;top:877.3px" width="12" height="5" viewBox="0 0 12 5"><rect x="0.5" y="0.5" width="10" height="4" rx="2" fill="#7aa8d4" stroke="#3a6a9a" stroke-width="0.6"/><rect x="2" y="1.2" width="7" height="1" fill="#c8e0f4"/></svg>
<div class="a" style="left:592px;top:870.8px;width:112px;height:18px;background:#6f9bd2;"></div>
<div class="t" style="left:594.00px;top:869.61px;font-size:10.92px;line-height:20px;color:#fff;">РасшТНП_Разрешил</div>
<div class="a" style="left:841px;top:876.8px;width:7px;height:7px;background:#b8b8b8;border:1px solid #9a9a9a;box-sizing:border-box;border-radius:1px"></div>
<svg style="left:916px;top:873.3px" width="14" height="14" viewBox="0 0 14 14"><rect x="0.5" y="0.5" width="12" height="12" rx="2" fill="#fff" stroke="#a49a70"/><path d="M3 6.5 L5.5 9 L10 3.5" stroke="#222" stroke-width="1.6" fill="none"/></svg>
<div class="a" style="left:988px;top:870.8px;width:139px;height:18.0px;overflow:hidden">
<div class="t" style="left:5.00px;top:-1.16px;font-size:10.86px;line-height:20px;color:#000;">СправочникСсылка.Сотрудники</div>
</div>
<svg style="left:555px;top:894.2px" width="11" height="11" viewBox="0 0 11 11"><circle cx="5.5" cy="5.5" r="4.5" fill="#fff" stroke="#9a9a9a"/><path d="M3.3 5.5H7.7M5.5 3.3V7.7" stroke="#777"/></svg>
<svg style="left:573px;top:892.7px" width="14" height="13" viewBox="0 0 14 13"><rect x="0.5" y="0.5" width="13" height="12" fill="#f0f4f8" stroke="#3a6a9a"/><path d="M4.5 0.5V12.5M9 0.5V12.5" stroke="#3a6a9a"/><path d="M2 3V11M6.7 3V11M11.2 3V11" stroke="#8aa0c0" stroke-dasharray="1 1"/></svg>
<div class="t" style="left:594.00px;top:888.47px;font-size:11.06px;line-height:20px;color:#000;">МатериалыЗаказчика</div>
<div class="a" style="left:841px;top:895.7px;width:7px;height:7px;background:#b8b8b8;border:1px solid #9a9a9a;box-sizing:border-box;border-radius:1px"></div>
<svg style="left:916px;top:892.2px" width="14" height="14" viewBox="0 0 14 14"><rect x="0.5" y="0.5" width="12" height="12" rx="2" fill="#fff" stroke="#a49a70"/><path d="M3 6.5 L5.5 9 L10 3.5" stroke="#222" stroke-width="1.6" fill="none"/></svg>
<div class="a" style="left:988px;top:889.7px;width:139px;height:18.0px;overflow:hidden">
<div class="t" style="left:5.00px;top:-1.47px;font-size:11.74px;line-height:20px;color:#000;">(ДокументТабличнаяЧасть</div>
</div>
<svg style="left:555px;top:913.1px" width="11" height="11" viewBox="0 0 11 11"><circle cx="5.5" cy="5.5" r="4.5" fill="#fff" stroke="#9a9a9a"/><path d="M3.3 5.5H7.7M5.5 3.3V7.7" stroke="#777"/></svg>
<svg style="left:573px;top:911.6px" width="14" height="13" viewBox="0 0 14 13"><rect x="0.5" y="0.5" width="13" height="12" fill="#f0f4f8" stroke="#3a6a9a"/><path d="M4.5 0.5V12.5M9 0.5V12.5" stroke="#3a6a9a"/><path d="M2 3V11M6.7 3V11M11.2 3V11" stroke="#8aa0c0" stroke-dasharray="1 1"/></svg>
<div class="t" style="left:594.00px;top:907.44px;font-size:10.83px;line-height:20px;color:#000;">Материалы</div>
<div class="a" style="left:841px;top:914.6px;width:7px;height:7px;background:#b8b8b8;border:1px solid #9a9a9a;box-sizing:border-box;border-radius:1px"></div>
<svg style="left:916px;top:911.1px" width="14" height="14" viewBox="0 0 14 14"><rect x="0.5" y="0.5" width="12" height="12" rx="2" fill="#fff" stroke="#a49a70"/><path d="M3 6.5 L5.5 9 L10 3.5" stroke="#222" stroke-width="1.6" fill="none"/></svg>
<div class="a" style="left:988px;top:908.6px;width:139px;height:18.0px;overflow:hidden">
<div class="t" style="left:5.00px;top:-1.47px;font-size:11.74px;line-height:20px;color:#000;">(ДокументТабличнаяЧасть</div>
</div>
<div class="a" style="left:530px;top:927px;width:597px;height:1px;background:#b3aa80;"></div>
<div class="a" style="left:529px;top:927px;width:94px;height:22px;background:#fbf8ea;border:1px solid #b3aa80;border-top:none;border-radius:0 0 6px 6px;box-sizing:border-box;border-bottom:2px solid #f0c088;"></div>
<svg style="left:541px;top:932px" width="10" height="14" viewBox="0 0 10 14"><rect x="0.5" y="0.5" width="9" height="3.3" rx="1.5" fill="#5a8ac0"/><rect x="0.5" y="5" width="9" height="3.3" rx="1.5" fill="#5a8ac0"/><rect x="0.5" y="9.5" width="9" height="3.3" rx="1.5" fill="#5a8ac0"/></svg>
<div class="t" style="left:556.00px;top:928.57px;font-size:11.63px;line-height:20px;color:#2a2200;">Реквизиты</div>
<div class="a" style="left:631px;top:927px;width:84px;height:22px;background:#ede6cc;border:1px solid #b3aa80;border-top:none;border-radius:0 0 6px 6px;box-sizing:border-box;"></div>
<svg style="left:643px;top:932px" width="10" height="14" viewBox="0 0 10 14"><rect x="0.5" y="0.5" width="9" height="3.3" rx="1.5" fill="#e8b020"/><rect x="0.5" y="5" width="9" height="3.3" rx="1.5" fill="#e8b020"/><rect x="0.5" y="9.5" width="9" height="3.3" rx="1.5" fill="#e8b020"/></svg>
<div class="t" style="left:658.00px;top:928.75px;font-size:11.09px;line-height:20px;color:#2a2200;">Команды</div>
<div class="a" style="left:723px;top:927px;width:97px;height:22px;background:#ede6cc;border:1px solid #b3aa80;border-top:none;border-radius:0 0 6px 6px;box-sizing:border-box;"></div>
<svg style="left:735px;top:932px" width="10" height="14" viewBox="0 0 10 14"><rect x="0.5" y="0.5" width="9" height="3.3" rx="1.5" fill="#a05a30"/><rect x="0.5" y="5" width="9" height="3.3" rx="1.5" fill="#a05a30"/><rect x="0.5" y="9.5" width="9" height="3.3" rx="1.5" fill="#a05a30"/></svg>
<div class="t" style="left:750.00px;top:928.76px;font-size:11.07px;line-height:20px;color:#2a2200;">Параметры</div>
<div class="a" style="left:3px;top:955px;width:2px;height:207px;background:#c0c0c0;"></div>
<div class="a" style="left:5px;top:955px;width:2px;height:207px;background:#b3aa80;"></div>
<div class="a" style="left:7px;top:955px;width:941px;height:207px;background:#ffffff;"></div>
<div class="a" style="left:11px;top:955px;width:1px;height:207px;background:#000;"></div>
<div class="a" style="left:946px;top:955px;width:1px;height:207px;background:#000;"></div>
<div class="a" style="left:947px;top:955px;width:1px;height:207px;background:#2a2a2a;"></div>
<div class="a" style="left:948px;top:955px;width:1px;height:207px;background:#8a8a8a;"></div>
<div class="a" style="left:24px;top:956px;width:902px;height:111px;border:1px solid #c4c4c4;border-top:none;box-sizing:border-box"></div>
<div class="a" style="left:35px;top:956px;width:880px;height:101px;border:1px solid #c8c8c8;border-top:none;box-sizing:border-box"></div>
<svg style="left:43px;top:1045px" width="6" height="8" viewBox="0 0 6 8"><path d="M5 0 L0.5 4 L5 8Z" fill="#b0b0b0"/></svg>
<div class="a" style="left:59px;top:1045px;width:818px;height:8px;background:#d4d4d4;border-radius:4px"></div>
<div class="a" style="left:59px;top:1045px;width:131px;height:8px;background:#9a9a9a;border-radius:4px"></div>
<svg style="left:886px;top:1045px" width="6" height="8" viewBox="0 0 6 8"><path d="M0.5 0 L5 4 L0.5 8Z" fill="#404040"/></svg>
<svg style="left:903px;top:1029px" width="8" height="5" viewBox="0 0 8 5"><path d="M0 0 L8 0 L4 4.5Z" fill="#c0c0c0"/></svg>
<div class="a" style="left:6px;top:955px;width:1121px;height:1px;background:#b3aa80;"></div>
<div class="t" style="left:25.00px;top:1075.52px;font-size:13.22px;line-height:20px;color:#1f5fb5;">Комиссия</div>
<div class="a" style="left:25px;top:1091px;width:59px;height:1px;background:#1f5fb5;"></div>
<div class="a" style="left:21px;top:1100px;width:467px;height:30px;border:2px solid #2d8de6;box-sizing:border-box"></div>
<div class="a" style="left:494px;top:1100px;width:434px;height:30px;border:2px solid #2d8de6;box-sizing:border-box"></div>
<div class="t" style="left:25.00px;top:1106.01px;font-size:12.67px;line-height:20px;color:#4a4a4a;">Разрешил:</div>
<div class="a" style="left:116px;top:1103px;width:370px;height:24px;border:1px solid #a8a8a8;border-top-color:#8a8a8a;border-radius:3px;box-sizing:border-box;background:#fff"></div>
<div class="a" style="left:443px;top:1104px;width:1px;height:22px;background:#c8c8c8;"></div>
<div class="a" style="left:464px;top:1104px;width:1px;height:22px;background:#c8c8c8;"></div>
<svg style="left:451px;top:1114px" width="6" height="4" viewBox="0 0 6 4"><path d="M0 0H6L3 3.5Z" fill="#333"/></svg>
<svg style="left:469px;top:1109px" width="11" height="11" viewBox="0 0 11 11"><rect x="3.5" y="1.5" width="6" height="6" fill="#fff" stroke="#444"/><rect x="1.5" y="3.5" width="6" height="6" fill="none" stroke="#444"/><rect x="3.5" y="1.5" width="6" height="6" fill="#fff" stroke="#444"/></svg>
<div class="t" style="left:497.50px;top:1106.06px;font-size:12.51px;line-height:20px;color:#4a4a4a;">Получил:</div>
<div class="a" style="left:556px;top:1103px;width:370px;height:24px;border:1px solid #a8a8a8;border-top-color:#8a8a8a;border-radius:3px;box-sizing:border-box;background:#fff"></div>
<div class="a" style="left:883px;top:1104px;width:1px;height:22px;background:#c8c8c8;"></div>
<div class="a" style="left:904px;top:1104px;width:1px;height:22px;background:#c8c8c8;"></div>
<svg style="left:891px;top:1114px" width="6" height="4" viewBox="0 0 6 4"><path d="M0 0H6L3 3.5Z" fill="#333"/></svg>
<svg style="left:909px;top:1109px" width="11" height="11" viewBox="0 0 11 11"><rect x="3.5" y="1.5" width="6" height="6" fill="#fff" stroke="#444"/><rect x="1.5" y="3.5" width="6" height="6" fill="none" stroke="#444"/><rect x="3.5" y="1.5" width="6" height="6" fill="#fff" stroke="#444"/></svg>
<div class="t" style="left:25.00px;top:1139.90px;font-size:12.39px;line-height:20px;color:#4a4a4a;">Комментарий:</div>
<div class="a" style="left:116px;top:1137px;width:310px;height:24px;border:1px solid #a8a8a8;border-top-color:#8a8a8a;border-radius:3px;box-sizing:border-box;background:#fff"></div>
<div class="t" style="left:436.70px;top:1139.92px;font-size:12.36px;line-height:20px;color:#4a4a4a;">Ответственный:</div>
<div class="a" style="left:535px;top:1137px;width:391px;height:24px;border:1px solid #a8a8a8;border-top-color:#8a8a8a;border-radius:3px;box-sizing:border-box;background:#fff"></div>
<div class="a" style="left:883px;top:1138px;width:1px;height:22px;background:#c8c8c8;"></div>
<div class="a" style="left:904px;top:1138px;width:1px;height:22px;background:#c8c8c8;"></div>
<svg style="left:891px;top:1148px" width="6" height="4" viewBox="0 0 6 4"><path d="M0 0H6L3 3.5Z" fill="#333"/></svg>
<svg style="left:909px;top:1143px" width="11" height="11" viewBox="0 0 11 11"><rect x="3.5" y="1.5" width="6" height="6" fill="#fff" stroke="#444"/><rect x="1.5" y="3.5" width="6" height="6" fill="none" stroke="#444"/><rect x="3.5" y="1.5" width="6" height="6" fill="#fff" stroke="#444"/></svg></body></html>
